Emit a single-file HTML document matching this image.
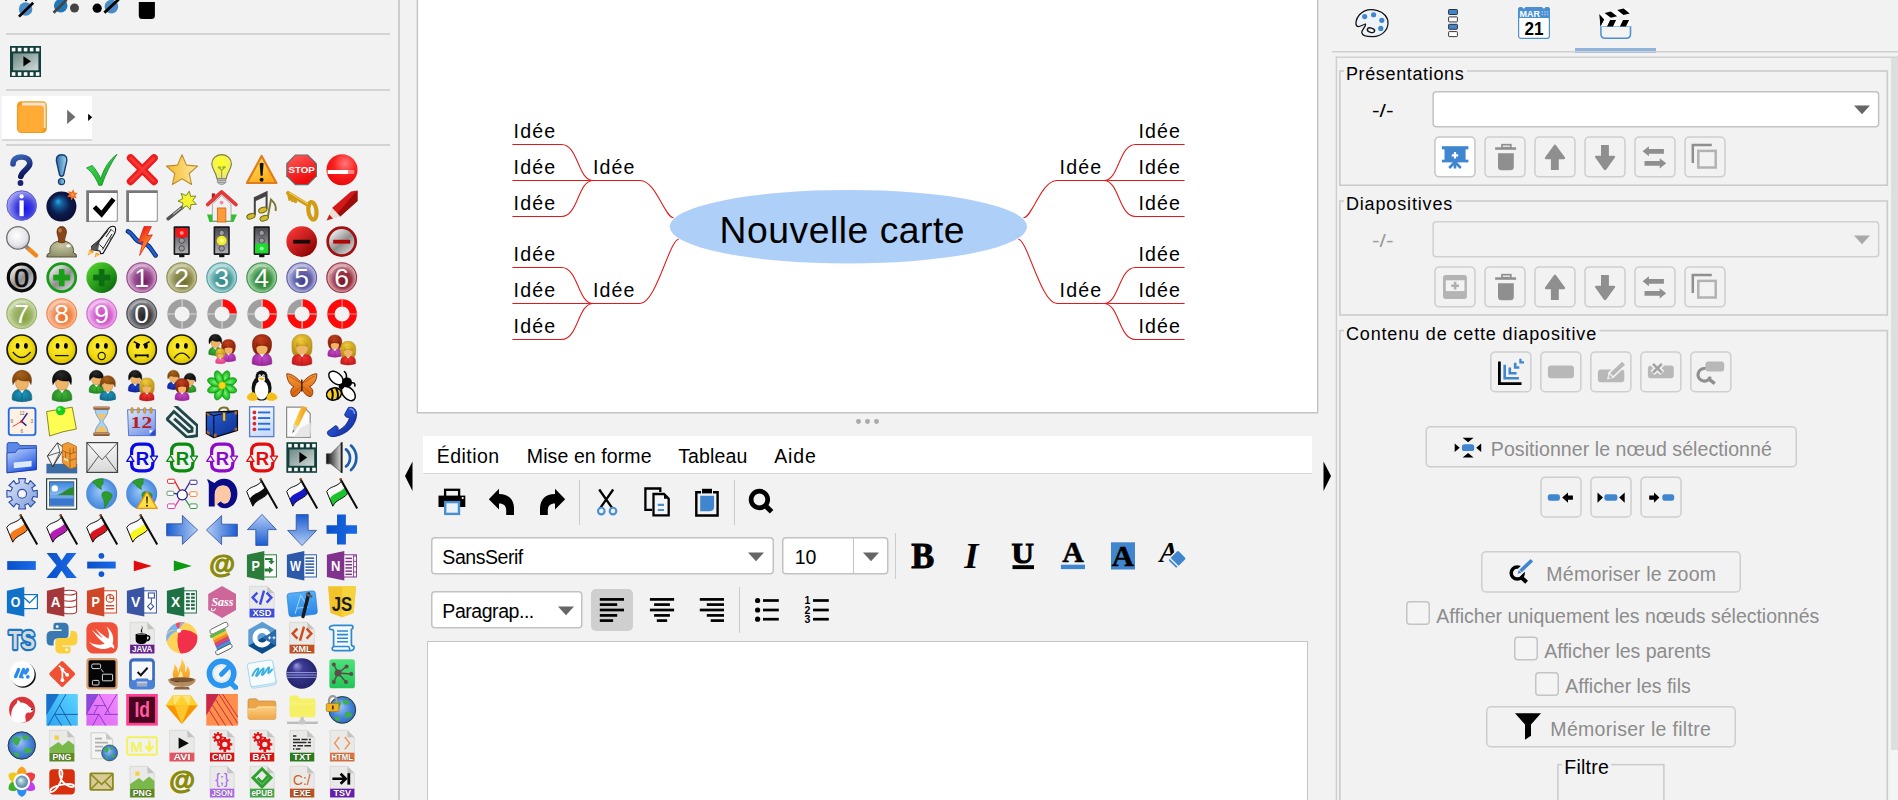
<!DOCTYPE html>
<html lang="fr"><head><meta charset="utf-8"><title>Freeplane</title><style>
html,body{margin:0;padding:0;background:#f2f2f2;overflow:hidden}
#app{position:relative;width:1898px;height:800px;overflow:hidden;background:#f2f2f2;font-family:"Liberation Sans",sans-serif}
#app div,#app span,#app svg{position:absolute}
#left{left:0;top:0;width:398px;height:800px}
.t{white-space:nowrap}
</style></head><body><div id="app">
<div id="left">
<svg class="i" style="left:0px;top:0px" width="200" height="24" viewBox="0 0 200 24"><circle cx="25.6" cy="9" r="6.8" fill="#4a8cc8"/><path d="M19 16.6 L33.2 2.8" stroke="#000" stroke-width="2.7"/><circle cx="26" cy="0" r="1.2" fill="#000"/><circle cx="60.7" cy="5.7" r="6.8" fill="#1f78b8"/><path d="M53.6 12.8 L66.6 -0.2" stroke="#444" stroke-width="2.8"/><circle cx="74.5" cy="8" r="4.5" fill="#444"/><circle cx="97.2" cy="8.2" r="4.6" fill="#000"/><circle cx="111.4" cy="6.6" r="6.8" fill="#4a8cc8"/><path d="M104.4 12.6 L118.6 -0.6" stroke="#000" stroke-width="2.8"/><path d="M138.8 1.9 H154.9 V15.5 Q154.9 19 151.4 19 H142.3 Q138.8 19 138.8 15.5 Z" fill="#000"/></svg>
<div class="ab" style="left:6px;top:33px;width:384px;height:2px;background:#d4d4d4"></div>
<div class="ab" style="left:6px;top:89px;width:384px;height:2px;background:#d4d4d4"></div>
<div class="ab" style="left:6px;top:144px;width:384px;height:2px;background:#d4d4d4"></div>
<svg class="i" style="left:10px;top:46px" width="32" height="32" viewBox="0 0 32 32"><defs><linearGradient id="fg" x1="0" y1="0" x2="1" y2="1"><stop offset="0" stop-color="#6f8884"/><stop offset="1" stop-color="#d0dad8"/></linearGradient></defs><rect x="0" y="0" width="31" height="31" fill="#123f3b"/><rect x="1.8" y="1.8" width="3.6" height="3.6" fill="#fff"/><rect x="1.8" y="26.2" width="3.6" height="3.6" fill="#fff"/><rect x="7.8" y="1.8" width="3.6" height="3.6" fill="#fff"/><rect x="7.8" y="26.2" width="3.6" height="3.6" fill="#fff"/><rect x="13.8" y="1.8" width="3.6" height="3.6" fill="#fff"/><rect x="13.8" y="26.2" width="3.6" height="3.6" fill="#fff"/><rect x="19.8" y="1.8" width="3.6" height="3.6" fill="#fff"/><rect x="19.8" y="26.2" width="3.6" height="3.6" fill="#fff"/><rect x="25.8" y="1.8" width="3.6" height="3.6" fill="#fff"/><rect x="25.8" y="26.2" width="3.6" height="3.6" fill="#fff"/><rect x="3.1" y="7.4" width="25.3" height="16.9" fill="url(#fg)"/><path d="M13.4 10.2 V20.5 L21 15.35 Z" fill="#000"/></svg>
<div class="ab" style="left:2px;top:96px;width:90px;height:43px;background:#fff;border-bottom:2px solid #d9d9d9"></div>
<svg class="i" style="left:15px;top:99px" width="36" height="36" viewBox="0 0 36 36"><rect x="1.9" y="2.2" width="30" height="31.8" rx="4.5" fill="#f29c1f"/><path d="M7 3.6 H28 Q30.6 3.6 30.6 6.5 V29 H28.6 V7.5 H7 Z" fill="#efe2cf"/><rect x="3.2" y="6.6" width="25" height="26.4" rx="2.5" fill="#ffab35"/></svg>
<svg class="i" style="left:64px;top:106px" width="32" height="20" viewBox="0 0 32 20"><path d="M3.1 3.7 V18.1 L11.5 10.9 Z" fill="#6e6e6e"/><path d="M24.1 7.8 V14.9 L28.2 11.35 Z" fill="#000"/></svg>
<svg class="i" style="left:0;top:0" width="398" height="800" viewBox="0 0 398 800"><defs><linearGradient id="gq" x1="0" y1="0" x2="0.3" y2="1"><stop offset="0" stop-color="#3a64b8"/><stop offset="1" stop-color="#10185e"/></linearGradient><linearGradient id="ge" x1="0" y1="0" x2="1" y2="0"><stop offset="0" stop-color="#2a6aa8"/><stop offset="1" stop-color="#a6d8f2"/></linearGradient><linearGradient id="gk" x1="0" y1="0" x2="1" y2="1"><stop offset="0" stop-color="#4be058"/><stop offset="1" stop-color="#12a024"/></linearGradient><linearGradient id="gs" x1="0" y1="0" x2="1" y2="0"><stop offset="0" stop-color="#f6b82a"/><stop offset="1" stop-color="#ffe9a0"/></linearGradient><radialGradient id="gb" cx="0.5" cy="0.35" r="0.6"><stop offset="0" stop-color="#ffff20"/><stop offset="0.7" stop-color="#f4f25a"/><stop offset="1" stop-color="#e6e690"/></radialGradient><linearGradient id="gw" x1="0" y1="0" x2="0.6" y2="1"><stop offset="0" stop-color="#fff060"/><stop offset="1" stop-color="#ffa818"/></linearGradient><linearGradient id="gst" x1="0" y1="0" x2="0.4" y2="1"><stop offset="0" stop-color="#ff5a5a"/><stop offset="1" stop-color="#ee0a0a"/></linearGradient><radialGradient id="gn" cx="0.6" cy="0.3" r="0.75"><stop offset="0" stop-color="#ff7a7a"/><stop offset="0.5" stop-color="#fa2020"/><stop offset="1" stop-color="#e60808"/></radialGradient><radialGradient id="gi" cx="0.6" cy="0.6" r="0.62"><stop offset="0" stop-color="#1414e8"/><stop offset="0.45" stop-color="#3c3ce0"/><stop offset="1" stop-color="#aaaaf2"/></radialGradient><radialGradient id="gbo" cx="0.5" cy="0.5" r="0.55" fx="0.38" fy="0.32"><stop offset="0" stop-color="#20b0e0"/><stop offset="0.25" stop-color="#145a98"/><stop offset="0.6" stop-color="#0c1c4c"/><stop offset="1" stop-color="#0a0a30"/></radialGradient><radialGradient id="gmg" cx="0.45" cy="0.4" r="0.6"><stop offset="0" stop-color="#ffffff"/><stop offset="0.7" stop-color="#e6e6ea"/><stop offset="1" stop-color="#c4c4cc"/></radialGradient><radialGradient id="gsp" cx="0.5" cy="0.3" r="0.7"><stop offset="0" stop-color="#c4c4a0"/><stop offset="1" stop-color="#8e8e6a"/></radialGradient><linearGradient id="glt" x1="0.3" y1="0" x2="0.7" y2="1"><stop offset="0" stop-color="#f01818"/><stop offset="1" stop-color="#ffc428"/></linearGradient><linearGradient id="gtlr" x1="0" y1="0" x2="0" y2="1"><stop offset="0" stop-color="#4a4a52"/><stop offset="1" stop-color="#b0b0b4"/></linearGradient><linearGradient id="gtly" x1="0" y1="0" x2="0" y2="1"><stop offset="0" stop-color="#4a4a52"/><stop offset="1" stop-color="#b0b0b4"/></linearGradient><linearGradient id="gtlg" x1="0" y1="0" x2="0" y2="1"><stop offset="0" stop-color="#4a4a52"/><stop offset="1" stop-color="#b0b0b4"/></linearGradient><linearGradient id="gmr" x1="0.15" y1="0.1" x2="0.85" y2="0.9"><stop offset="0" stop-color="#f83434"/><stop offset="1" stop-color="#8c0404"/></linearGradient><linearGradient id="gsv" x1="0" y1="0" x2="1" y2="1"><stop offset="0" stop-color="#8c8c8c"/><stop offset="1" stop-color="#f2f2f2"/></linearGradient><linearGradient id="gsv2" x1="0.15" y1="0.1" x2="0.85" y2="0.9"><stop offset="0" stop-color="#f4f4f4"/><stop offset="0.55" stop-color="#8e8e8e"/><stop offset="1" stop-color="#d6d6d6"/></linearGradient><linearGradient id="gpg" x1="0.15" y1="0.1" x2="0.85" y2="0.9"><stop offset="0" stop-color="#4cd02a"/><stop offset="1" stop-color="#0c6c0e"/></linearGradient><radialGradient id="gb_1" cx="0.5" cy="0.5" r="0.56" fx="0.6" fy="0.66"><stop offset="0" stop-color="#6c1e62"/><stop offset="0.5" stop-color="#9a4a8e"/><stop offset="0.85" stop-color="#d2a8cc"/><stop offset="1" stop-color="#9a4a8e"/></radialGradient><radialGradient id="gb_2" cx="0.5" cy="0.5" r="0.56" fx="0.6" fy="0.66"><stop offset="0" stop-color="#6e6e30"/><stop offset="0.5" stop-color="#8e8e50"/><stop offset="0.85" stop-color="#c8c6a0"/><stop offset="1" stop-color="#8e8e50"/></radialGradient><radialGradient id="gb_3" cx="0.5" cy="0.5" r="0.56" fx="0.6" fy="0.66"><stop offset="0" stop-color="#2e8484"/><stop offset="0.5" stop-color="#52a0a0"/><stop offset="0.85" stop-color="#b4dcdc"/><stop offset="1" stop-color="#52a0a0"/></radialGradient><radialGradient id="gb_4" cx="0.5" cy="0.5" r="0.56" fx="0.6" fy="0.66"><stop offset="0" stop-color="#1e7626"/><stop offset="0.5" stop-color="#42964a"/><stop offset="0.85" stop-color="#a6d4aa"/><stop offset="1" stop-color="#42964a"/></radialGradient><radialGradient id="gb_5" cx="0.5" cy="0.5" r="0.56" fx="0.6" fy="0.66"><stop offset="0" stop-color="#3c3c8e"/><stop offset="0.5" stop-color="#6464ac"/><stop offset="0.85" stop-color="#b8b8e0"/><stop offset="1" stop-color="#6464ac"/></radialGradient><radialGradient id="gb_6" cx="0.5" cy="0.5" r="0.56" fx="0.6" fy="0.66"><stop offset="0" stop-color="#741422"/><stop offset="0.5" stop-color="#9c3646"/><stop offset="0.85" stop-color="#d8a8ae"/><stop offset="1" stop-color="#9c3646"/></radialGradient><radialGradient id="gb_7" cx="0.5" cy="0.5" r="0.56" fx="0.6" fy="0.66"><stop offset="0" stop-color="#86a040"/><stop offset="0.5" stop-color="#9cb464"/><stop offset="0.85" stop-color="#ccd8ae"/><stop offset="1" stop-color="#9cb464"/></radialGradient><radialGradient id="gb_8" cx="0.5" cy="0.5" r="0.56" fx="0.6" fy="0.66"><stop offset="0" stop-color="#ec6c28"/><stop offset="0.5" stop-color="#f28a50"/><stop offset="0.85" stop-color="#f8c0a0"/><stop offset="1" stop-color="#f28a50"/></radialGradient><radialGradient id="gb_9" cx="0.5" cy="0.5" r="0.56" fx="0.6" fy="0.66"><stop offset="0" stop-color="#c444c0"/><stop offset="0.5" stop-color="#d668d2"/><stop offset="0.85" stop-color="#eeb4ec"/><stop offset="1" stop-color="#d668d2"/></radialGradient><radialGradient id="gb_0" cx="0.5" cy="0.5" r="0.56" fx="0.6" fy="0.66"><stop offset="0" stop-color="#1c1c1e"/><stop offset="0.5" stop-color="#4a4a4e"/><stop offset="0.85" stop-color="#9c9ca0"/><stop offset="1" stop-color="#4a4a4e"/></radialGradient><radialGradient id="gsm" cx="0.5" cy="0.5" r="0.6" fx="0.4" fy="0.3"><stop offset="0" stop-color="#fff040"/><stop offset="0.6" stop-color="#f2dc10"/><stop offset="1" stop-color="#cdb400"/></radialGradient><radialGradient id="ph1" cx="0.5" cy="0.4" r="0.7" fx="0.4" fy="0.25"><stop offset="0" stop-color="#2a2a2a"/><stop offset="1" stop-color="#000"/></radialGradient><radialGradient id="ps1" cx="0.5" cy="0.5" r="0.75" fx="0.5" fy="0.3"><stop offset="0" stop-color="#44b83a"/><stop offset="1" stop-color="#1c7a1c"/></radialGradient><radialGradient id="ph2" cx="0.5" cy="0.4" r="0.7" fx="0.4" fy="0.25"><stop offset="0" stop-color="#c4401c"/><stop offset="1" stop-color="#7e1c08"/></radialGradient><radialGradient id="ps2" cx="0.5" cy="0.5" r="0.75" fx="0.5" fy="0.3"><stop offset="0" stop-color="#cc4ccc"/><stop offset="1" stop-color="#8a1c8a"/></radialGradient><radialGradient id="ph3" cx="0.5" cy="0.4" r="0.7" fx="0.4" fy="0.25"><stop offset="0" stop-color="#f4cc3c"/><stop offset="1" stop-color="#b08a14"/></radialGradient><radialGradient id="ps3" cx="0.5" cy="0.5" r="0.75" fx="0.5" fy="0.3"><stop offset="0" stop-color="#ff6aa8"/><stop offset="1" stop-color="#d0387a"/></radialGradient><radialGradient id="ph4" cx="0.5" cy="0.4" r="0.7" fx="0.4" fy="0.25"><stop offset="0" stop-color="#c4401c"/><stop offset="1" stop-color="#7e1c08"/></radialGradient><radialGradient id="ps4" cx="0.5" cy="0.5" r="0.75" fx="0.5" fy="0.3"><stop offset="0" stop-color="#cc4ccc"/><stop offset="1" stop-color="#8a1c8a"/></radialGradient><radialGradient id="ph5" cx="0.5" cy="0.4" r="0.7" fx="0.4" fy="0.25"><stop offset="0" stop-color="#f4cc3c"/><stop offset="1" stop-color="#b08a14"/></radialGradient><radialGradient id="ps5" cx="0.5" cy="0.5" r="0.75" fx="0.5" fy="0.3"><stop offset="0" stop-color="#f83838"/><stop offset="1" stop-color="#b01010"/></radialGradient><radialGradient id="ph6" cx="0.5" cy="0.4" r="0.7" fx="0.4" fy="0.25"><stop offset="0" stop-color="#c4401c"/><stop offset="1" stop-color="#7e1c08"/></radialGradient><radialGradient id="ps6" cx="0.5" cy="0.5" r="0.75" fx="0.5" fy="0.3"><stop offset="0" stop-color="#cc4ccc"/><stop offset="1" stop-color="#8a1c8a"/></radialGradient><radialGradient id="ph7" cx="0.5" cy="0.4" r="0.7" fx="0.4" fy="0.25"><stop offset="0" stop-color="#f4cc3c"/><stop offset="1" stop-color="#b08a14"/></radialGradient><radialGradient id="ps7" cx="0.5" cy="0.5" r="0.75" fx="0.5" fy="0.3"><stop offset="0" stop-color="#f83838"/><stop offset="1" stop-color="#b01010"/></radialGradient><radialGradient id="ph8" cx="0.5" cy="0.4" r="0.7" fx="0.4" fy="0.25"><stop offset="0" stop-color="#a8621c"/><stop offset="1" stop-color="#6e3a08"/></radialGradient><radialGradient id="ps8" cx="0.5" cy="0.5" r="0.75" fx="0.5" fy="0.3"><stop offset="0" stop-color="#1e9ac0"/><stop offset="1" stop-color="#0c5e7c"/></radialGradient><radialGradient id="ph9" cx="0.5" cy="0.4" r="0.7" fx="0.4" fy="0.25"><stop offset="0" stop-color="#2a2a2a"/><stop offset="1" stop-color="#000"/></radialGradient><radialGradient id="ps9" cx="0.5" cy="0.5" r="0.75" fx="0.5" fy="0.3"><stop offset="0" stop-color="#44b83a"/><stop offset="1" stop-color="#1c7a1c"/></radialGradient><radialGradient id="ph10" cx="0.5" cy="0.4" r="0.7" fx="0.4" fy="0.25"><stop offset="0" stop-color="#2a2a2a"/><stop offset="1" stop-color="#000"/></radialGradient><radialGradient id="ps10" cx="0.5" cy="0.5" r="0.75" fx="0.5" fy="0.3"><stop offset="0" stop-color="#44b83a"/><stop offset="1" stop-color="#1c7a1c"/></radialGradient><radialGradient id="ph11" cx="0.5" cy="0.4" r="0.7" fx="0.4" fy="0.25"><stop offset="0" stop-color="#a8621c"/><stop offset="1" stop-color="#6e3a08"/></radialGradient><radialGradient id="ps11" cx="0.5" cy="0.5" r="0.75" fx="0.5" fy="0.3"><stop offset="0" stop-color="#1e9ac0"/><stop offset="1" stop-color="#0c5e7c"/></radialGradient><radialGradient id="ph12" cx="0.5" cy="0.4" r="0.7" fx="0.4" fy="0.25"><stop offset="0" stop-color="#2a2a2a"/><stop offset="1" stop-color="#000"/></radialGradient><radialGradient id="ps12" cx="0.5" cy="0.5" r="0.75" fx="0.5" fy="0.3"><stop offset="0" stop-color="#1c44d8"/><stop offset="1" stop-color="#0c1c8a"/></radialGradient><radialGradient id="ph13" cx="0.5" cy="0.4" r="0.7" fx="0.4" fy="0.25"><stop offset="0" stop-color="#f4cc3c"/><stop offset="1" stop-color="#b08a14"/></radialGradient><radialGradient id="ps13" cx="0.5" cy="0.5" r="0.75" fx="0.5" fy="0.3"><stop offset="0" stop-color="#f83838"/><stop offset="1" stop-color="#b01010"/></radialGradient><radialGradient id="ph14" cx="0.5" cy="0.4" r="0.7" fx="0.4" fy="0.25"><stop offset="0" stop-color="#a8621c"/><stop offset="1" stop-color="#6e3a08"/></radialGradient><radialGradient id="ps14" cx="0.5" cy="0.5" r="0.75" fx="0.5" fy="0.3"><stop offset="0" stop-color="#1c44d8"/><stop offset="1" stop-color="#0c1c8a"/></radialGradient><radialGradient id="ph15" cx="0.5" cy="0.4" r="0.7" fx="0.4" fy="0.25"><stop offset="0" stop-color="#2a2a2a"/><stop offset="1" stop-color="#000"/></radialGradient><radialGradient id="ps15" cx="0.5" cy="0.5" r="0.75" fx="0.5" fy="0.3"><stop offset="0" stop-color="#44b83a"/><stop offset="1" stop-color="#1c7a1c"/></radialGradient><radialGradient id="ph16" cx="0.5" cy="0.4" r="0.7" fx="0.4" fy="0.25"><stop offset="0" stop-color="#c4401c"/><stop offset="1" stop-color="#7e1c08"/></radialGradient><radialGradient id="ps16" cx="0.5" cy="0.5" r="0.75" fx="0.5" fy="0.3"><stop offset="0" stop-color="#cc4ccc"/><stop offset="1" stop-color="#8a1c8a"/></radialGradient><radialGradient id="gfl" cx="0.5" cy="0.5" r="0.6"><stop offset="0" stop-color="#7af07a"/><stop offset="0.6" stop-color="#28c828"/><stop offset="1" stop-color="#0c9a0c"/></radialGradient><linearGradient id="gbf" x1="0" y1="0" x2="0" y2="1"><stop offset="0" stop-color="#f89a38"/><stop offset="1" stop-color="#d8600c"/></linearGradient><linearGradient id="gcal" x1="0" y1="0" x2="0.6" y2="1"><stop offset="0" stop-color="#dfe8fc"/><stop offset="1" stop-color="#7a9ae8"/></linearGradient><linearGradient id="gbc" x1="0" y1="0" x2="1" y2="1"><stop offset="0" stop-color="#2a62d8"/><stop offset="1" stop-color="#0c2c8c"/></linearGradient><linearGradient id="gls" x1="0" y1="0" x2="0.5" y2="1"><stop offset="0" stop-color="#ffffff"/><stop offset="1" stop-color="#c8dcfa"/></linearGradient><linearGradient id="gpn" x1="0" y1="0" x2="1" y2="0"><stop offset="0" stop-color="#ffd24a"/><stop offset="1" stop-color="#f09a18"/></linearGradient><linearGradient id="gph" x1="0" y1="0" x2="1" y2="1"><stop offset="0" stop-color="#3a6cf0"/><stop offset="1" stop-color="#0a2494"/></linearGradient><linearGradient id="gfo" x1="0.1" y1="0" x2="0.7" y2="1"><stop offset="0" stop-color="#bcd6fc"/><stop offset="1" stop-color="#1c4ee0"/></linearGradient><linearGradient id="gml" x1="0" y1="0" x2="0" y2="1"><stop offset="0" stop-color="#f8f8f8"/><stop offset="1" stop-color="#d8d8d8"/></linearGradient><linearGradient id="fg2" x1="0" y1="0" x2="1" y2="1"><stop offset="0" stop-color="#6f8884"/><stop offset="1" stop-color="#d0dad8"/></linearGradient><linearGradient id="gau" x1="0" y1="0" x2="1" y2="0"><stop offset="0" stop-color="#0a0a0a"/><stop offset="1" stop-color="#e8e8e8"/></linearGradient><linearGradient id="ggr" x1="0" y1="0" x2="1" y2="1"><stop offset="0" stop-color="#dfe8f8"/><stop offset="1" stop-color="#7a9ad8"/></linearGradient><linearGradient id="gim" x1="0" y1="0" x2="0" y2="1"><stop offset="0" stop-color="#3c86e0"/><stop offset="1" stop-color="#c4e2fa"/></linearGradient><radialGradient id="ggl" cx="0.5" cy="0.5" r="0.6" fx="0.45" fy="0.4"><stop offset="0" stop-color="#9cc8f8"/><stop offset="0.6" stop-color="#5a9ae6"/><stop offset="1" stop-color="#3c7cd0"/></radialGradient><linearGradient id="garr" x1="0" y1="0" x2="1" y2="0"><stop offset="0" stop-color="#1a5cd2"/><stop offset="1" stop-color="#b4cef4"/></linearGradient><linearGradient id="garl" x1="0" y1="0" x2="1" y2="0"><stop offset="0" stop-color="#1a5cd2"/><stop offset="1" stop-color="#b4cef4"/></linearGradient><linearGradient id="garu" x1="0" y1="0" x2="1" y2="0"><stop offset="0" stop-color="#1a5cd2"/><stop offset="1" stop-color="#b4cef4"/></linearGradient><linearGradient id="gard" x1="0" y1="0" x2="1" y2="0"><stop offset="0" stop-color="#1a5cd2"/><stop offset="1" stop-color="#b4cef4"/></linearGradient><linearGradient id="gpb" x1="0" y1="0" x2="1" y2="0"><stop offset="0" stop-color="#0a50c8"/><stop offset="1" stop-color="#1a6ae8"/></linearGradient><linearGradient id="gxc" x1="0" y1="0" x2="0" y2="1"><stop offset="0" stop-color="#54b0f8"/><stop offset="1" stop-color="#2a86e6"/></linearGradient><linearGradient id="gfi" x1="0" y1="0" x2="0" y2="1"><stop offset="0" stop-color="#ffd45a"/><stop offset="1" stop-color="#f49a1c"/></linearGradient><radialGradient id="gec" cx="0.5" cy="0.5" r="0.6" fx="0.32" fy="0.22"><stop offset="0" stop-color="#9c9ce0"/><stop offset="0.3" stop-color="#3c3c94"/><stop offset="1" stop-color="#1c1c62"/></radialGradient><linearGradient id="gnw" x1="0" y1="0" x2="0" y2="1"><stop offset="0" stop-color="#4ce27a"/><stop offset="1" stop-color="#22c458"/></linearGradient><linearGradient id="gad" x1="0" y1="1" x2="1" y2="0"><stop offset="0" stop-color="#2aa4f2"/><stop offset="1" stop-color="#5cd4ff"/></linearGradient><linearGradient id="gap" x1="0" y1="1" x2="1" y2="0"><stop offset="0" stop-color="#d864f2"/><stop offset="1" stop-color="#f48cff"/></linearGradient><linearGradient id="gfy" x1="0" y1="0" x2="0" y2="1"><stop offset="0" stop-color="#fcd083"/><stop offset="1" stop-color="#f0a848"/></linearGradient><radialGradient id="ggl2" cx="0.5" cy="0.5" r="0.6" fx="0.4" fy="0.35"><stop offset="0" stop-color="#a8c8f4"/><stop offset="0.55" stop-color="#4a86dc"/><stop offset="1" stop-color="#2c5cb8"/></radialGradient><radialGradient id="gpc" cx="0.5" cy="0.5" r="0.55" fx="0.4" fy="0.35"><stop offset="0" stop-color="#e8f4f8"/><stop offset="0.5" stop-color="#8ab4c8"/><stop offset="1" stop-color="#4a7a9a"/></radialGradient></defs><g transform="translate(6,154)"><path d="M7 10 C7 5.4 10.5 3 15.5 3 C20.8 3 23.8 5.8 23.8 9.6 C23.8 14.5 16.5 16.2 14.8 22.4" fill="none" stroke="url(#gq)" stroke-width="5.6" stroke-linecap="round"/><circle cx="14.5" cy="29" r="2.9" fill="#1a2470"/></g><g transform="translate(46,154)"><path d="M15.6 0.8 C20 0.8 21.2 3.6 20.8 7 L17.6 21 Q15.6 23.6 13.6 21 L10.4 7 C10 3.6 11.2 0.8 15.6 0.8 Z" fill="url(#ge)" stroke="#143c6c" stroke-width="1.4"/><circle cx="15.5" cy="27.6" r="3.1" fill="url(#ge)" stroke="#143c6c" stroke-width="1.2"/></g><g transform="translate(86,154)"><path d="M0.6 14 L6.2 11.4 C9.5 15 12.6 20 14.8 24.6 C18 14 24 5 31 0.4 C25 9 19.5 20 15.8 31.3 L12.8 31.3 C10 24 5.5 17.5 0.6 14 Z" fill="url(#gk)" stroke="#0c8c1e" stroke-width="0.8"/></g><g transform="translate(126,154)"><path d="M4.6 4 L28 27.4 M28 4 L4.6 27.4" stroke="#ee1c1c" stroke-width="7.6" stroke-linecap="round"/><path d="M5 4.4 L27.6 27 M27.6 4.4 L5 27" stroke="#ff4848" stroke-width="3" stroke-linecap="round" opacity="0.6"/></g><g transform="translate(166,154)"><polygon points="16.0,0.8 20.5,11.1 31.6,12.1 23.2,19.5 25.6,30.5 16.0,24.8 6.4,30.5 8.8,19.5 0.4,12.1 11.5,11.1" fill="url(#gs)" stroke="#b98d2c" stroke-width="1.1" stroke-linejoin="round"/></g><g transform="translate(206,154)"><path d="M15.6 0.6 C21.5 0.6 25.4 4.8 25.4 10 C25.4 15 20.8 18.5 20.2 24.6 H11 C10.4 18.5 5.8 15 5.8 10 C5.8 4.8 9.7 0.6 15.6 0.6 Z" fill="url(#gb)" stroke="#7d7d30" stroke-width="1.1"/><path d="M13.5 14 L15.6 16.5 L17.8 14 M15.6 16.5 V24" stroke="#a8a83a" stroke-width="1.3" fill="none"/><ellipse cx="13.4" cy="13.4" rx="1.8" ry="1.2" fill="#9ab83a"/><ellipse cx="18" cy="13.2" rx="1.8" ry="1.2" fill="#9ab83a"/><path d="M11.4 24.8 H19.8 V28.5 Q15.6 32.6 11.4 28.5 Z" fill="#c8c8c8" stroke="#888" stroke-width="0.8"/><path d="M11.6 26.6 H19.6 M12 28.6 H19.2" stroke="#888" stroke-width="0.8"/></g><g transform="translate(246,154)"><path d="M15.6 2 L30.4 29 H0.9 Z" fill="url(#gw)" stroke="#e27b1b" stroke-width="2.2" stroke-linejoin="round"/><path d="M13.6 9.4 Q15.6 8 17.6 9.4 L16.6 21.8 H14.6 Z" fill="#111"/><circle cx="15.6" cy="25.8" r="2" fill="#111"/></g><g transform="translate(286,154)"><polygon points="31.0,22.2 22.0,31.2 9.2,31.2 0.2,22.2 0.2,9.4 9.2,0.4 22.0,0.4 31.0,9.4" fill="#6a6a6a"/><polygon points="29.8,21.7 21.5,30.0 9.7,30.0 1.4,21.7 1.4,9.9 9.7,1.6 21.5,1.6 29.8,9.9" fill="url(#gst)"/><text x="2.6" y="19.2" font-family="Liberation Sans, sans-serif" font-weight="bold" font-size="9.6" fill="#fff" textLength="26.2" lengthAdjust="spacingAndGlyphs">STOP</text></g><g transform="translate(326,154)"><circle cx="16" cy="15.8" r="15.5" fill="url(#gn)"/><rect x="1.6" y="16" width="20.6" height="4" fill="#fff"/><rect x="22.2" y="16" width="6" height="4" fill="#ffd0d0" opacity="0.55"/></g><g transform="translate(6,190)"><circle cx="15.7" cy="15.6" r="14.8" fill="url(#gi)" stroke="#5c5ccc" stroke-width="1"/><circle cx="15.6" cy="6.4" r="2.1" fill="#fff"/><rect x="13.5" y="10.4" width="4.2" height="15.8" fill="#fff"/></g><g transform="translate(46,190)"><circle cx="15.4" cy="16.6" r="15" fill="url(#gbo)"/><polygon points="27.4,-0.7 28.3,2.5 31.7,2.9 29.4,5.3 30.7,8.4 27.4,7.6 25.4,10.3 24.5,7.1 21.1,6.7 23.4,4.3 22.1,1.2 25.4,2.0" fill="#f06a28"/><circle cx="26.6" cy="4.6" r="1.6" fill="#ff9a3a"/></g><g transform="translate(86,190)"><rect x="0.2" y="0.2" width="31.6" height="31.6" fill="#fff"/><path d="M0.2 32 V0.2 H31.8 V3 H3 V32 Z" fill="#777"/><path d="M31.3 3 V31.3 H3" fill="none" stroke="#8a8a8a" stroke-width="1"/><path d="M8.4 16.8 L15.6 24.2 L27.6 9" fill="none" stroke="#000" stroke-width="4.8"/></g><g transform="translate(126,190)"><rect x="0.2" y="0.2" width="31.6" height="31.6" fill="#fff"/><path d="M0.2 32 V0.2 H31.8 V3 H3 V32 Z" fill="#777"/><path d="M31.3 3 V31.3 H3" fill="none" stroke="#8a8a8a" stroke-width="1"/></g><g transform="translate(166,190)"><path d="M16.6 17.2 L2 28.8" stroke="#555" stroke-width="3.4" stroke-linecap="round"/><path d="M15 18 L7 24.4" stroke="#bbb" stroke-width="1.1"/><polygon points="23.3,1.1 24.6,6.4 30.0,6.0 26.8,10.3 30.4,14.3 25.0,14.5 24.2,19.8 20.7,15.7 16.0,18.4 17.0,13.1 12.0,11.1 16.8,8.6 15.2,3.4 20.2,5.6" fill="#f4f430" stroke="#7a8a2a" stroke-width="1"/></g><g transform="translate(206,190)"><path d="M1 24.5 H31 L27.5 32 H3.5 Z" fill="#2fc02f"/><rect x="5.8" y="3.4" width="3.4" height="7" fill="#a82020"/><path d="M6.4 14 L15.6 5.5 L25 14 V31 H6.4 Z" fill="#eef0f2" stroke="#9a9a9a" stroke-width="0.8"/><path d="M1.6 14.6 L15.6 1.8 L30 14.6" fill="none" stroke="#e23a3a" stroke-width="3.6" stroke-linejoin="round" stroke-linecap="round"/><circle cx="15.6" cy="12.6" r="1.9" fill="#f08a9a"/><rect x="11.4" y="18" width="8.4" height="14" fill="#ff9a3a" stroke="#d06a18" stroke-width="0.9"/></g><g transform="translate(246,190)"><path d="M8.8 25 V8 L20.6 2.4 V19" fill="none" stroke="#444" stroke-width="2"/><path d="M8.8 8 L20.6 2.4 V6 L8.8 11.6 Z" fill="#444"/><path d="M21.8 27 L25 9.6 C27 12 31 14 29.6 21" fill="none" stroke="#7a7430" stroke-width="1.9"/><ellipse cx="5" cy="26.2" rx="4.3" ry="2.6" transform="rotate(-20 5 26.2)" fill="#d4bc24" stroke="#6a6420" stroke-width="1"/><ellipse cx="16.8" cy="20" rx="4.3" ry="2.6" transform="rotate(-20 16.8 20)" fill="#d4bc24" stroke="#6a6420" stroke-width="1"/><ellipse cx="18.2" cy="28.2" rx="4.3" ry="2.6" transform="rotate(-20 18.2 28.2)" fill="#d4bc24" stroke="#6a6420" stroke-width="1"/></g><g transform="translate(286,190)"><path d="M2 3 L23 15.6" stroke="#cf9c14" stroke-width="4" stroke-linecap="round"/><path d="M2.4 4 L4 10.6 M5.8 6 L6.8 12 M9.2 8.4 L9.8 13" stroke="#cf9c14" stroke-width="2.8"/><ellipse cx="26.4" cy="20.8" rx="4" ry="8.8" transform="rotate(-8 26.4 20.8)" fill="none" stroke="#cf9c14" stroke-width="4.2"/><path d="M3 2.6 L22 14" stroke="#f4d868" stroke-width="1"/></g><g transform="translate(326,190)"><path d="M31.5 0.6 V11 L14.2 26.4 L6 18 L25 1.6 Z" fill="#d41818"/><path d="M31.5 0.6 V11 L14.2 26.4 L11.5 23.6 L28 4 Z" fill="#9c0c0c"/><path d="M6 18 L14.2 26.4 L0.6 30.6 Z" fill="#eadfd6"/><path d="M3.4 24.4 L7 28.4 L0.6 30.6 Z" fill="#c81c1c"/></g><g transform="translate(6,226)"><path d="M20.4 20.8 L30 29.4" stroke="#f08a1c" stroke-width="4.4" stroke-linecap="round"/><path d="M19.4 19.8 L22.4 22.6" stroke="#8a8a8a" stroke-width="3.4"/><circle cx="12" cy="11.9" r="11.3" fill="url(#gmg)" stroke="#6e6e6e" stroke-width="1.3"/></g><g transform="translate(46,226)"><path d="M0.8 31 Q0.4 27.4 4 27 C3 20 7 15 15.6 15 C24 15 28.4 20 27.4 27 Q31 27.4 30.6 31 Z" fill="url(#gsp)" stroke="#55553a" stroke-width="1"/><path d="M12.4 16 C13.6 12 11 9.6 11 6 C11 2.6 13 0.6 15.6 0.6 C18.4 0.6 20.4 2.6 20.4 6 C20.4 9.6 17.8 12 19 16 Q15.6 17.6 12.4 16 Z" fill="#8a4618" stroke="#5a2a0c" stroke-width="0.8"/><ellipse cx="14" cy="4.4" rx="1.8" ry="2.2" fill="#b87a48"/><ellipse cx="22.4" cy="19.8" rx="2.4" ry="1.6" fill="#fff" opacity="0.9"/></g><g transform="translate(86,226)"><path d="M4 23 L1.6 29.6 L8 26 Z" fill="#ff8a1a"/><path d="M10 26.4 L8.4 31.4 L14 28.6 Z" fill="#ff8a1a"/><path d="M3.6 25 L2.4 28.4 L6 26.6 Z M10 28 L9.4 30.4 L12 29 Z" fill="#ffe040"/><path d="M28.8 0.8 C30.4 3 29.6 6 27.8 9 L17 27.4 L14.6 27.8 L14 25 L6 23.6 L5.6 20.4 L14 13.4 L22.6 2.4 C24.6 0.4 27 -0.2 28.8 0.8 Z" fill="#f4f4f6" stroke="#111" stroke-width="1.1" stroke-linejoin="round"/><path d="M14 13.4 L5.6 20.4 L6 23.6 L12 24.4 Z M27.8 9 L22 19 L24.4 12 Z" fill="#555"/><path d="M22 4.6 L10 19.6 M26 8 L16.4 23.6 M13.4 18.4 L17.4 22.4 M25 3.6 L20 11" stroke="#222" stroke-width="1" fill="none"/><path d="M24 3 L27.6 5.4" stroke="#555" stroke-width="1"/></g><g transform="translate(126,226)"><path d="M2 5.4 C8 8 8 15 15.6 16.6 C24 18 25 24 29.6 29.4" fill="none" stroke="#0c2a6c" stroke-width="4.6" stroke-linecap="round"/><path d="M2 5.4 C8 8 8 15 15.6 16.6 C24 18 25 24 29.6 29.4" fill="none" stroke="#1e62d8" stroke-width="2.6" stroke-linecap="round"/><path d="M18 0.6 H25.4 L21 9.6 L26.4 8.8 L13.6 29.4 L17 15.4 L12.4 16.4 Z" fill="url(#glt)" stroke="#e01010" stroke-width="0.7"/></g><g transform="translate(166,226)"><rect x="13.2" y="27" width="5.2" height="4.2" fill="#111"/><rect x="7.6" y="0.3" width="16.2" height="28.6" rx="1" fill="#1a1a1e"/><rect x="9.2" y="2" width="13" height="25.2" fill="url(#gtlr)"/><rect x="9.2" y="2" width="13" height="9.6" fill="#e81818" opacity="0.75"/><circle cx="15.7" cy="7" r="4.9" fill="#ff1010"/><circle cx="15.7" cy="7" r="2" fill="#ff9090"/><circle cx="15.7" cy="14.6" r="2.7" fill="#9a9aa0" stroke="#3a3a3e" stroke-width="0.8"/><circle cx="15.7" cy="22.4" r="2.7" fill="#9a9aa0" stroke="#3a3a3e" stroke-width="0.8"/></g><g transform="translate(206,226)"><rect x="13.2" y="27" width="5.2" height="4.2" fill="#111"/><rect x="7.6" y="0.3" width="16.2" height="28.6" rx="1" fill="#1a1a1e"/><rect x="9.2" y="2" width="13" height="25.2" fill="url(#gtly)"/><circle cx="15.7" cy="7" r="2.7" fill="#9a9aa0" stroke="#3a3a3e" stroke-width="0.8"/><circle cx="15.7" cy="14.6" r="4.9" fill="#f4f020"/><circle cx="15.7" cy="14.6" r="2" fill="#ffff9a"/><circle cx="15.7" cy="22.4" r="2.7" fill="#9a9aa0" stroke="#3a3a3e" stroke-width="0.8"/></g><g transform="translate(246,226)"><rect x="13.2" y="27" width="5.2" height="4.2" fill="#111"/><rect x="7.6" y="0.3" width="16.2" height="28.6" rx="1" fill="#1a1a1e"/><rect x="9.2" y="2" width="13" height="25.2" fill="url(#gtlg)"/><circle cx="15.7" cy="7" r="2.7" fill="#9a9aa0" stroke="#3a3a3e" stroke-width="0.8"/><circle cx="15.7" cy="14.6" r="2.7" fill="#9a9aa0" stroke="#3a3a3e" stroke-width="0.8"/><rect x="9.2" y="17.6" width="13" height="9.6" fill="#1ed82e"/><circle cx="15.7" cy="22.4" r="4.9" fill="#18e028"/><circle cx="15.7" cy="22.4" r="2" fill="#a0ffa8"/></g><g transform="translate(286,226)"><circle cx="15.7" cy="15.6" r="15.3" fill="url(#gmr)"/><rect x="7.2" y="13.8" width="17" height="3.8" fill="#1a0a0a"/></g><g transform="translate(326,226)"><circle cx="15.7" cy="15.6" r="14" fill="url(#gsv2)" stroke="#a01212" stroke-width="2.7"/><rect x="7.2" y="13.8" width="17" height="3.8" fill="#b00606"/></g><g transform="translate(6,262)"><circle cx="15.7" cy="15.4" r="13.4" fill="url(#gsv2)" stroke="#0a0a0a" stroke-width="3.2"/><text x="15.7" y="25" text-anchor="middle" font-family="Liberation Sans, sans-serif" font-size="26.5" fill="#0a0a0a" stroke="#0a0a0a" stroke-width="0.7">0</text></g><g transform="translate(46,262)"><circle cx="15.7" cy="15.6" r="14" fill="url(#gsv2)" stroke="#189a18" stroke-width="2.7"/><path d="M7.2 15.6 H24.2 M15.7 7 V24.2" stroke="#18a018" stroke-width="5.6"/></g><g transform="translate(86,262)"><circle cx="15.7" cy="15.6" r="15.3" fill="url(#gpg)"/><path d="M7.2 15.6 H24.2 M15.7 7 V24.2" stroke="#0b6e10" stroke-width="5.6"/></g><g transform="translate(126,262)"><circle cx="15.7" cy="15.6" r="14.9" fill="url(#gb_1)" stroke="#9a4a8e" stroke-width="1.1"/><path d="M5 11 A11.6 11.6 0 0 1 20 4.6" fill="none" stroke="#fff" stroke-width="1.6" stroke-linecap="round" opacity="0.35"/><text x="15.7" y="25" text-anchor="middle" font-family="Liberation Sans, sans-serif" font-size="26.5" fill="#fff">1</text></g><g transform="translate(166,262)"><circle cx="15.7" cy="15.6" r="14.9" fill="url(#gb_2)" stroke="#8e8e50" stroke-width="1.1"/><path d="M5 11 A11.6 11.6 0 0 1 20 4.6" fill="none" stroke="#fff" stroke-width="1.6" stroke-linecap="round" opacity="0.35"/><text x="15.7" y="25" text-anchor="middle" font-family="Liberation Sans, sans-serif" font-size="26.5" fill="#fff">2</text></g><g transform="translate(206,262)"><circle cx="15.7" cy="15.6" r="14.9" fill="url(#gb_3)" stroke="#52a0a0" stroke-width="1.1"/><path d="M5 11 A11.6 11.6 0 0 1 20 4.6" fill="none" stroke="#fff" stroke-width="1.6" stroke-linecap="round" opacity="0.35"/><text x="15.7" y="25" text-anchor="middle" font-family="Liberation Sans, sans-serif" font-size="26.5" fill="#fff">3</text></g><g transform="translate(246,262)"><circle cx="15.7" cy="15.6" r="14.9" fill="url(#gb_4)" stroke="#42964a" stroke-width="1.1"/><path d="M5 11 A11.6 11.6 0 0 1 20 4.6" fill="none" stroke="#fff" stroke-width="1.6" stroke-linecap="round" opacity="0.35"/><text x="15.7" y="25" text-anchor="middle" font-family="Liberation Sans, sans-serif" font-size="26.5" fill="#fff">4</text></g><g transform="translate(286,262)"><circle cx="15.7" cy="15.6" r="14.9" fill="url(#gb_5)" stroke="#6464ac" stroke-width="1.1"/><path d="M5 11 A11.6 11.6 0 0 1 20 4.6" fill="none" stroke="#fff" stroke-width="1.6" stroke-linecap="round" opacity="0.35"/><text x="15.7" y="25" text-anchor="middle" font-family="Liberation Sans, sans-serif" font-size="26.5" fill="#fff">5</text></g><g transform="translate(326,262)"><circle cx="15.7" cy="15.6" r="14.9" fill="url(#gb_6)" stroke="#9c3646" stroke-width="1.1"/><path d="M5 11 A11.6 11.6 0 0 1 20 4.6" fill="none" stroke="#fff" stroke-width="1.6" stroke-linecap="round" opacity="0.35"/><text x="15.7" y="25" text-anchor="middle" font-family="Liberation Sans, sans-serif" font-size="26.5" fill="#fff">6</text></g><g transform="translate(6,298)"><circle cx="15.7" cy="15.6" r="14.9" fill="url(#gb_7)" stroke="#9cb464" stroke-width="1.1"/><path d="M5 11 A11.6 11.6 0 0 1 20 4.6" fill="none" stroke="#fff" stroke-width="1.6" stroke-linecap="round" opacity="0.35"/><text x="15.7" y="25" text-anchor="middle" font-family="Liberation Sans, sans-serif" font-size="26.5" fill="#fff">7</text></g><g transform="translate(46,298)"><circle cx="15.7" cy="15.6" r="14.9" fill="url(#gb_8)" stroke="#f28a50" stroke-width="1.1"/><path d="M5 11 A11.6 11.6 0 0 1 20 4.6" fill="none" stroke="#fff" stroke-width="1.6" stroke-linecap="round" opacity="0.35"/><text x="15.7" y="25" text-anchor="middle" font-family="Liberation Sans, sans-serif" font-size="26.5" fill="#fff">8</text></g><g transform="translate(86,298)"><circle cx="15.7" cy="15.6" r="14.9" fill="url(#gb_9)" stroke="#d668d2" stroke-width="1.1"/><path d="M5 11 A11.6 11.6 0 0 1 20 4.6" fill="none" stroke="#fff" stroke-width="1.6" stroke-linecap="round" opacity="0.35"/><text x="15.7" y="25" text-anchor="middle" font-family="Liberation Sans, sans-serif" font-size="26.5" fill="#fff">9</text></g><g transform="translate(126,298)"><circle cx="15.7" cy="15.6" r="14.9" fill="url(#gb_0)" stroke="#4a4a4e" stroke-width="1.1"/><path d="M5 11 A11.6 11.6 0 0 1 20 4.6" fill="none" stroke="#fff" stroke-width="1.6" stroke-linecap="round" opacity="0.35"/><text x="15.7" y="25" text-anchor="middle" font-family="Liberation Sans, sans-serif" font-size="26.5" fill="#fff">0</text></g><g transform="translate(166,298)"><path d="M16.10 1.20 A14.8 14.8 0 0 1 30.90 16.00 L23.70 16.00 A7.6 7.6 0 0 0 16.10 8.40 Z" fill="#a0a0a0"/><path d="M30.90 16.00 A14.8 14.8 0 0 1 16.10 30.80 L16.10 23.60 A7.6 7.6 0 0 0 23.70 16.00 Z" fill="#a0a0a0"/><path d="M16.10 30.80 A14.8 14.8 0 0 1 1.30 16.00 L8.50 16.00 A7.6 7.6 0 0 0 16.10 23.60 Z" fill="#a0a0a0"/><path d="M1.30 16.00 A14.8 14.8 0 0 1 16.10 1.20 L16.10 8.40 A7.6 7.6 0 0 0 8.50 16.00 Z" fill="#a0a0a0"/><path d="M16.1 1.1999999999999993 V8.4 M16.1 23.6 V30.8 M1.3000000000000007 16 H8.500000000000002 M23.700000000000003 16 H30.900000000000002" stroke="#d8d8d8" stroke-width="1.1"/></g><g transform="translate(206,298)"><path d="M16.10 1.20 A14.8 14.8 0 0 1 30.90 16.00 L23.70 16.00 A7.6 7.6 0 0 0 16.10 8.40 Z" fill="#ff0a0a"/><path d="M30.90 16.00 A14.8 14.8 0 0 1 16.10 30.80 L16.10 23.60 A7.6 7.6 0 0 0 23.70 16.00 Z" fill="#a0a0a0"/><path d="M16.10 30.80 A14.8 14.8 0 0 1 1.30 16.00 L8.50 16.00 A7.6 7.6 0 0 0 16.10 23.60 Z" fill="#a0a0a0"/><path d="M1.30 16.00 A14.8 14.8 0 0 1 16.10 1.20 L16.10 8.40 A7.6 7.6 0 0 0 8.50 16.00 Z" fill="#a0a0a0"/><path d="M16.1 1.1999999999999993 V8.4 M16.1 23.6 V30.8 M1.3000000000000007 16 H8.500000000000002 M23.700000000000003 16 H30.900000000000002" stroke="#d8d8d8" stroke-width="1.1"/></g><g transform="translate(246,298)"><path d="M16.10 1.20 A14.8 14.8 0 0 1 30.90 16.00 L23.70 16.00 A7.6 7.6 0 0 0 16.10 8.40 Z" fill="#ff0a0a"/><path d="M30.90 16.00 A14.8 14.8 0 0 1 16.10 30.80 L16.10 23.60 A7.6 7.6 0 0 0 23.70 16.00 Z" fill="#ff0a0a"/><path d="M16.10 30.80 A14.8 14.8 0 0 1 1.30 16.00 L8.50 16.00 A7.6 7.6 0 0 0 16.10 23.60 Z" fill="#a0a0a0"/><path d="M1.30 16.00 A14.8 14.8 0 0 1 16.10 1.20 L16.10 8.40 A7.6 7.6 0 0 0 8.50 16.00 Z" fill="#a0a0a0"/><path d="M16.1 1.1999999999999993 V8.4 M16.1 23.6 V30.8 M1.3000000000000007 16 H8.500000000000002 M23.700000000000003 16 H30.900000000000002" stroke="#d8d8d8" stroke-width="1.1"/></g><g transform="translate(286,298)"><path d="M16.10 1.20 A14.8 14.8 0 0 1 30.90 16.00 L23.70 16.00 A7.6 7.6 0 0 0 16.10 8.40 Z" fill="#ff0a0a"/><path d="M30.90 16.00 A14.8 14.8 0 0 1 16.10 30.80 L16.10 23.60 A7.6 7.6 0 0 0 23.70 16.00 Z" fill="#ff0a0a"/><path d="M16.10 30.80 A14.8 14.8 0 0 1 1.30 16.00 L8.50 16.00 A7.6 7.6 0 0 0 16.10 23.60 Z" fill="#ff0a0a"/><path d="M1.30 16.00 A14.8 14.8 0 0 1 16.10 1.20 L16.10 8.40 A7.6 7.6 0 0 0 8.50 16.00 Z" fill="#a0a0a0"/><path d="M16.1 1.1999999999999993 V8.4 M16.1 23.6 V30.8 M1.3000000000000007 16 H8.500000000000002 M23.700000000000003 16 H30.900000000000002" stroke="#d8d8d8" stroke-width="1.1"/></g><g transform="translate(326,298)"><path d="M16.10 1.20 A14.8 14.8 0 0 1 30.90 16.00 L23.70 16.00 A7.6 7.6 0 0 0 16.10 8.40 Z" fill="#ff0a0a"/><path d="M30.90 16.00 A14.8 14.8 0 0 1 16.10 30.80 L16.10 23.60 A7.6 7.6 0 0 0 23.70 16.00 Z" fill="#ff0a0a"/><path d="M16.10 30.80 A14.8 14.8 0 0 1 1.30 16.00 L8.50 16.00 A7.6 7.6 0 0 0 16.10 23.60 Z" fill="#ff0a0a"/><path d="M1.30 16.00 A14.8 14.8 0 0 1 16.10 1.20 L16.10 8.40 A7.6 7.6 0 0 0 8.50 16.00 Z" fill="#ff0a0a"/><path d="M16.1 1.1999999999999993 V8.4 M16.1 23.6 V30.8 M1.3000000000000007 16 H8.500000000000002 M23.700000000000003 16 H30.900000000000002" stroke="#ff8a80" stroke-width="1.1"/></g><g transform="translate(6,334)"><circle cx="15.7" cy="15.6" r="14.6" fill="url(#gsm)" stroke="#1a1a08" stroke-width="1.7"/><ellipse cx="11.6" cy="11.8" rx="1.9" ry="2.9" fill="#0a0a00"/><ellipse cx="19.9" cy="11.8" rx="1.9" ry="2.9" fill="#0a0a00"/><path d="M6.8 18 Q15.7 29 24.6 18" fill="none" stroke="#1a1a08" stroke-width="1.3"/></g><g transform="translate(46,334)"><circle cx="15.7" cy="15.6" r="14.6" fill="url(#gsm)" stroke="#1a1a08" stroke-width="1.7"/><ellipse cx="11.6" cy="11.8" rx="1.9" ry="2.9" fill="#0a0a00"/><ellipse cx="19.9" cy="11.8" rx="1.9" ry="2.9" fill="#0a0a00"/><path d="M9 21.6 H22.6" stroke="#1a1a08" stroke-width="1.3"/></g><g transform="translate(86,334)"><circle cx="15.7" cy="15.6" r="14.6" fill="url(#gsm)" stroke="#1a1a08" stroke-width="1.7"/><ellipse cx="11.6" cy="11.8" rx="1.9" ry="2.9" fill="#0a0a00"/><ellipse cx="19.9" cy="11.8" rx="1.9" ry="2.9" fill="#0a0a00"/><circle cx="15.7" cy="22" r="3.6" fill="#f6e428" stroke="#1a1a08" stroke-width="1.2"/></g><g transform="translate(126,334)"><circle cx="15.7" cy="15.6" r="14.6" fill="url(#gsm)" stroke="#1a1a08" stroke-width="1.7"/><ellipse cx="11.6" cy="11.8" rx="1.9" ry="2.9" fill="#0a0a00"/><ellipse cx="19.9" cy="11.8" rx="1.9" ry="2.9" fill="#0a0a00"/><path d="M7.8 7.6 L14 11 M23.6 7.6 L17.4 11" stroke="#0a0a00" stroke-width="1.6"/><path d="M9.6 21.4 H21.8 M9.6 20.2 V23.4 M21.8 20.2 V23.4" stroke="#0a0a00" stroke-width="1.8"/></g><g transform="translate(166,334)"><circle cx="15.7" cy="15.6" r="14.6" fill="url(#gsm)" stroke="#1a1a08" stroke-width="1.7"/><ellipse cx="11.6" cy="11.8" rx="1.9" ry="2.9" fill="#0a0a00"/><ellipse cx="19.9" cy="11.8" rx="1.9" ry="2.9" fill="#0a0a00"/><path d="M8 24.4 Q15.7 14 23.6 24.4" fill="none" stroke="#1a1a08" stroke-width="1.3"/></g><g transform="translate(206,334)"><g transform="translate(-1.5 0) scale(0.68)"><path d="M6.4 30 C5.4 24 8 20 12.6 19.4 L16 23.4 L19.4 19.4 C24 20 26.6 24 25.6 30 Q16 33.4 6.4 30 Z" fill="url(#ps1)" stroke="#1c7a1c" stroke-width="0.6"/><path d="M14 19.6 L16 23 L18 19.6 Z" fill="#fff"/><path d="M16 23 V31" stroke="#1c7a1c" stroke-width="0.7"/><ellipse cx="16" cy="13.4" rx="6.4" ry="6.8" fill="#efb468" stroke="#b07828" stroke-width="0.5"/><path d="M7 14.6 C4.6 5 10.6 0.3 16 0.3 C21.4 0.3 27.4 5 25 14.6 C24.2 13 23.4 11.6 22.6 10.8 C19 11.4 14 10.6 11.6 9.2 C10 10.4 8 12.4 7 14.6 Z" fill="url(#ph1)" stroke="#000" stroke-width="0.5"/></g><g transform="translate(11 5) scale(0.72)"><path d="M6.4 30 C5.4 24 8 20 12.6 19.4 L16 23.4 L19.4 19.4 C24 20 26.6 24 25.6 30 Q16 33.4 6.4 30 Z" fill="url(#ps2)" stroke="#8a1c8a" stroke-width="0.6"/><path d="M14 19.6 L16 23 L18 19.6 Z" fill="#fff"/><path d="M16 23 V31" stroke="#8a1c8a" stroke-width="0.7"/><path d="M16 0.6 C22.4 0.6 25.6 5 25.6 10 C25.6 14 24.6 17.4 22.4 19.4 H9.6 C7.4 17.4 6.4 14 6.4 10 C6.4 5 9.6 0.6 16 0.6 Z" fill="url(#ph2)" stroke="#7e1c08" stroke-width="0.6"/><ellipse cx="16" cy="14.8" rx="5.6" ry="5.8" fill="#efb468"/><path d="M10.2 13 Q16 10.6 21.8 13 L22 9 Q16 4 10 9 Z" fill="url(#ph2)"/></g><g transform="translate(6.4 14) scale(0.5)"><path d="M6.4 30 C5.4 24 8 20 12.6 19.4 L16 23.4 L19.4 19.4 C24 20 26.6 24 25.6 30 Q16 33.4 6.4 30 Z" fill="url(#ps3)" stroke="#d0387a" stroke-width="0.6"/><path d="M14 19.6 L16 23 L18 19.6 Z" fill="#fff"/><path d="M16 23 V31" stroke="#d0387a" stroke-width="0.7"/><path d="M16 0.6 C22.4 0.6 25.6 5 25.6 10 C25.6 14 24.6 17.4 22.4 19.4 H9.6 C7.4 17.4 6.4 14 6.4 10 C6.4 5 9.6 0.6 16 0.6 Z" fill="url(#ph3)" stroke="#b08a14" stroke-width="0.6"/><ellipse cx="16" cy="14.8" rx="5.6" ry="5.8" fill="#efb468"/><path d="M10.2 13 Q16 10.6 21.8 13 L22 9 Q16 4 10 9 Z" fill="url(#ph3)"/></g></g><g transform="translate(246,334)"><g transform="translate(0 0) scale(1.0)"><path d="M6.4 30 C5.4 24 8 20 12.6 19.4 L16 23.4 L19.4 19.4 C24 20 26.6 24 25.6 30 Q16 33.4 6.4 30 Z" fill="url(#ps4)" stroke="#8a1c8a" stroke-width="0.6"/><path d="M14 19.6 L16 23 L18 19.6 Z" fill="#fff"/><path d="M16 23 V31" stroke="#8a1c8a" stroke-width="0.7"/><path d="M16 0.6 C22.4 0.6 25.6 5 25.6 10 C25.6 14 24.6 17.4 22.4 19.4 H9.6 C7.4 17.4 6.4 14 6.4 10 C6.4 5 9.6 0.6 16 0.6 Z" fill="url(#ph4)" stroke="#7e1c08" stroke-width="0.6"/><ellipse cx="16" cy="14.8" rx="5.6" ry="5.8" fill="#efb468"/><path d="M10.2 13 Q16 10.6 21.8 13 L22 9 Q16 4 10 9 Z" fill="url(#ph4)"/></g></g><g transform="translate(286,334)"><g transform="translate(0 0) scale(1.0)"><path d="M6.4 30 C5.4 24 8 20 12.6 19.4 L16 23.4 L19.4 19.4 C24 20 26.6 24 25.6 30 Q16 33.4 6.4 30 Z" fill="url(#ps5)" stroke="#b01010" stroke-width="0.6"/><path d="M14 19.6 L16 23 L18 19.6 Z" fill="#fff"/><path d="M16 23 V31" stroke="#b01010" stroke-width="0.7"/><path d="M16 0.4 C23 0.4 26 5 26 10 C26 14 26.4 18 24 21 L20.4 20 L11.6 20 L8 21 C5.6 18 6 14 6 10 C6 5 9 0.4 16 0.4 Z" fill="url(#ph5)" stroke="#b08a14" stroke-width="0.6"/><ellipse cx="16" cy="14.8" rx="5.6" ry="5.8" fill="#efb468"/><path d="M10.2 13 Q16 10.6 21.8 13 L22 9 Q16 4 10 9 Z" fill="url(#ph5)"/></g></g><g transform="translate(326,334)"><g transform="translate(-2.6 0.5) scale(0.72)"><path d="M6.4 30 C5.4 24 8 20 12.6 19.4 L16 23.4 L19.4 19.4 C24 20 26.6 24 25.6 30 Q16 33.4 6.4 30 Z" fill="url(#ps6)" stroke="#8a1c8a" stroke-width="0.6"/><path d="M14 19.6 L16 23 L18 19.6 Z" fill="#fff"/><path d="M16 23 V31" stroke="#8a1c8a" stroke-width="0.7"/><path d="M16 0.6 C22.4 0.6 25.6 5 25.6 10 C25.6 14 24.6 17.4 22.4 19.4 H9.6 C7.4 17.4 6.4 14 6.4 10 C6.4 5 9.6 0.6 16 0.6 Z" fill="url(#ph6)" stroke="#7e1c08" stroke-width="0.6"/><ellipse cx="16" cy="14.8" rx="5.6" ry="5.8" fill="#efb468"/><path d="M10.2 13 Q16 10.6 21.8 13 L22 9 Q16 4 10 9 Z" fill="url(#ph6)"/></g><g transform="translate(10 7) scale(0.76)"><path d="M6.4 30 C5.4 24 8 20 12.6 19.4 L16 23.4 L19.4 19.4 C24 20 26.6 24 25.6 30 Q16 33.4 6.4 30 Z" fill="url(#ps7)" stroke="#b01010" stroke-width="0.6"/><path d="M14 19.6 L16 23 L18 19.6 Z" fill="#fff"/><path d="M16 23 V31" stroke="#b01010" stroke-width="0.7"/><path d="M16 0.4 C23 0.4 26 5 26 10 C26 14 26.4 18 24 21 L20.4 20 L11.6 20 L8 21 C5.6 18 6 14 6 10 C6 5 9 0.4 16 0.4 Z" fill="url(#ph7)" stroke="#b08a14" stroke-width="0.6"/><ellipse cx="16" cy="14.8" rx="5.6" ry="5.8" fill="#efb468"/><path d="M10.2 13 Q16 10.6 21.8 13 L22 9 Q16 4 10 9 Z" fill="url(#ph7)"/></g></g><g transform="translate(6,370)"><g transform="translate(0 0) scale(1.0)"><path d="M6.4 30 C5.4 24 8 20 12.6 19.4 L16 23.4 L19.4 19.4 C24 20 26.6 24 25.6 30 Q16 33.4 6.4 30 Z" fill="url(#ps8)" stroke="#0c5e7c" stroke-width="0.6"/><path d="M14 19.6 L16 23 L18 19.6 Z" fill="#fff"/><path d="M16 23 V31" stroke="#0c5e7c" stroke-width="0.7"/><ellipse cx="16" cy="13.4" rx="6.4" ry="6.8" fill="#efb468" stroke="#b07828" stroke-width="0.5"/><path d="M7 14.6 C4.6 5 10.6 0.3 16 0.3 C21.4 0.3 27.4 5 25 14.6 C24.2 13 23.4 11.6 22.6 10.8 C19 11.4 14 10.6 11.6 9.2 C10 10.4 8 12.4 7 14.6 Z" fill="url(#ph8)" stroke="#6e3a08" stroke-width="0.5"/></g></g><g transform="translate(46,370)"><g transform="translate(0 0) scale(1.0)"><path d="M6.4 30 C5.4 24 8 20 12.6 19.4 L16 23.4 L19.4 19.4 C24 20 26.6 24 25.6 30 Q16 33.4 6.4 30 Z" fill="url(#ps9)" stroke="#1c7a1c" stroke-width="0.6"/><path d="M14 19.6 L16 23 L18 19.6 Z" fill="#fff"/><path d="M16 23 V31" stroke="#1c7a1c" stroke-width="0.7"/><ellipse cx="16" cy="13.4" rx="6.4" ry="6.8" fill="#efb468" stroke="#b07828" stroke-width="0.5"/><path d="M7 14.6 C4.6 5 10.6 0.3 16 0.3 C21.4 0.3 27.4 5 25 14.6 C24.2 13 23.4 11.6 22.6 10.8 C19 11.4 14 10.6 11.6 9.2 C10 10.4 8 12.4 7 14.6 Z" fill="url(#ph9)" stroke="#000" stroke-width="0.5"/></g></g><g transform="translate(86,370)"><g transform="translate(-1.4 0) scale(0.74)"><path d="M6.4 30 C5.4 24 8 20 12.6 19.4 L16 23.4 L19.4 19.4 C24 20 26.6 24 25.6 30 Q16 33.4 6.4 30 Z" fill="url(#ps10)" stroke="#1c7a1c" stroke-width="0.6"/><path d="M14 19.6 L16 23 L18 19.6 Z" fill="#fff"/><path d="M16 23 V31" stroke="#1c7a1c" stroke-width="0.7"/><ellipse cx="16" cy="13.4" rx="6.4" ry="6.8" fill="#efb468" stroke="#b07828" stroke-width="0.5"/><path d="M7 14.6 C4.6 5 10.6 0.3 16 0.3 C21.4 0.3 27.4 5 25 14.6 C24.2 13 23.4 11.6 22.6 10.8 C19 11.4 14 10.6 11.6 9.2 C10 10.4 8 12.4 7 14.6 Z" fill="url(#ph10)" stroke="#000" stroke-width="0.5"/></g><g transform="translate(9 5.4) scale(0.8)"><path d="M6.4 30 C5.4 24 8 20 12.6 19.4 L16 23.4 L19.4 19.4 C24 20 26.6 24 25.6 30 Q16 33.4 6.4 30 Z" fill="url(#ps11)" stroke="#0c5e7c" stroke-width="0.6"/><path d="M14 19.6 L16 23 L18 19.6 Z" fill="#fff"/><path d="M16 23 V31" stroke="#0c5e7c" stroke-width="0.7"/><ellipse cx="16" cy="13.4" rx="6.4" ry="6.8" fill="#efb468" stroke="#b07828" stroke-width="0.5"/><path d="M7 14.6 C4.6 5 10.6 0.3 16 0.3 C21.4 0.3 27.4 5 25 14.6 C24.2 13 23.4 11.6 22.6 10.8 C19 11.4 14 10.6 11.6 9.2 C10 10.4 8 12.4 7 14.6 Z" fill="url(#ph11)" stroke="#6e3a08" stroke-width="0.5"/></g></g><g transform="translate(126,370)"><g transform="translate(-2 0) scale(0.7)"><path d="M6.4 30 C5.4 24 8 20 12.6 19.4 L16 23.4 L19.4 19.4 C24 20 26.6 24 25.6 30 Q16 33.4 6.4 30 Z" fill="url(#ps12)" stroke="#0c1c8a" stroke-width="0.6"/><path d="M14 19.6 L16 23 L18 19.6 Z" fill="#fff"/><path d="M16 23 V31" stroke="#0c1c8a" stroke-width="0.7"/><ellipse cx="16" cy="13.4" rx="6.4" ry="6.8" fill="#efb468" stroke="#b07828" stroke-width="0.5"/><path d="M7 14.6 C4.6 5 10.6 0.3 16 0.3 C21.4 0.3 27.4 5 25 14.6 C24.2 13 23.4 11.6 22.6 10.8 C19 11.4 14 10.6 11.6 9.2 C10 10.4 8 12.4 7 14.6 Z" fill="url(#ph12)" stroke="#000" stroke-width="0.5"/></g><g transform="translate(9 7.6) scale(0.74)"><path d="M6.4 30 C5.4 24 8 20 12.6 19.4 L16 23.4 L19.4 19.4 C24 20 26.6 24 25.6 30 Q16 33.4 6.4 30 Z" fill="url(#ps13)" stroke="#b01010" stroke-width="0.6"/><path d="M14 19.6 L16 23 L18 19.6 Z" fill="#fff"/><path d="M16 23 V31" stroke="#b01010" stroke-width="0.7"/><path d="M16 0.4 C23 0.4 26 5 26 10 C26 14 26.4 18 24 21 L20.4 20 L11.6 20 L8 21 C5.6 18 6 14 6 10 C6 5 9 0.4 16 0.4 Z" fill="url(#ph13)" stroke="#b08a14" stroke-width="0.6"/><ellipse cx="16" cy="14.8" rx="5.6" ry="5.8" fill="#efb468"/><path d="M10.2 13 Q16 10.6 21.8 13 L22 9 Q16 4 10 9 Z" fill="url(#ph13)"/></g></g><g transform="translate(166,370)"><g transform="translate(-2.4 0) scale(0.62)"><path d="M6.4 30 C5.4 24 8 20 12.6 19.4 L16 23.4 L19.4 19.4 C24 20 26.6 24 25.6 30 Q16 33.4 6.4 30 Z" fill="url(#ps14)" stroke="#0c1c8a" stroke-width="0.6"/><path d="M14 19.6 L16 23 L18 19.6 Z" fill="#fff"/><path d="M16 23 V31" stroke="#0c1c8a" stroke-width="0.7"/><ellipse cx="16" cy="13.4" rx="6.4" ry="6.8" fill="#efb468" stroke="#b07828" stroke-width="0.5"/><path d="M7 14.6 C4.6 5 10.6 0.3 16 0.3 C21.4 0.3 27.4 5 25 14.6 C24.2 13 23.4 11.6 22.6 10.8 C19 11.4 14 10.6 11.6 9.2 C10 10.4 8 12.4 7 14.6 Z" fill="url(#ph14)" stroke="#6e3a08" stroke-width="0.5"/></g><g transform="translate(14 3) scale(0.62)"><path d="M6.4 30 C5.4 24 8 20 12.6 19.4 L16 23.4 L19.4 19.4 C24 20 26.6 24 25.6 30 Q16 33.4 6.4 30 Z" fill="url(#ps15)" stroke="#1c7a1c" stroke-width="0.6"/><path d="M14 19.6 L16 23 L18 19.6 Z" fill="#fff"/><path d="M16 23 V31" stroke="#1c7a1c" stroke-width="0.7"/><ellipse cx="16" cy="13.4" rx="6.4" ry="6.8" fill="#efb468" stroke="#b07828" stroke-width="0.5"/><path d="M7 14.6 C4.6 5 10.6 0.3 16 0.3 C21.4 0.3 27.4 5 25 14.6 C24.2 13 23.4 11.6 22.6 10.8 C19 11.4 14 10.6 11.6 9.2 C10 10.4 8 12.4 7 14.6 Z" fill="url(#ph15)" stroke="#000" stroke-width="0.5"/></g><g transform="translate(4.6 8) scale(0.72)"><path d="M6.4 30 C5.4 24 8 20 12.6 19.4 L16 23.4 L19.4 19.4 C24 20 26.6 24 25.6 30 Q16 33.4 6.4 30 Z" fill="url(#ps16)" stroke="#8a1c8a" stroke-width="0.6"/><path d="M14 19.6 L16 23 L18 19.6 Z" fill="#fff"/><path d="M16 23 V31" stroke="#8a1c8a" stroke-width="0.7"/><path d="M16 0.6 C22.4 0.6 25.6 5 25.6 10 C25.6 14 24.6 17.4 22.4 19.4 H9.6 C7.4 17.4 6.4 14 6.4 10 C6.4 5 9.6 0.6 16 0.6 Z" fill="url(#ph16)" stroke="#7e1c08" stroke-width="0.6"/><ellipse cx="16" cy="14.8" rx="5.6" ry="5.8" fill="#efb468"/><path d="M10.2 13 Q16 10.6 21.8 13 L22 9 Q16 4 10 9 Z" fill="url(#ph16)"/></g></g><g transform="translate(206,370)"><ellipse cx="16.1" cy="7.2" rx="3.9" ry="7.4" transform="rotate(22.5 16.1 15.4)" fill="url(#gfl)" stroke="#0c8c0c" stroke-width="0.6"/><ellipse cx="16.1" cy="7.2" rx="3.9" ry="7.4" transform="rotate(67.5 16.1 15.4)" fill="url(#gfl)" stroke="#0c8c0c" stroke-width="0.6"/><ellipse cx="16.1" cy="7.2" rx="3.9" ry="7.4" transform="rotate(112.5 16.1 15.4)" fill="url(#gfl)" stroke="#0c8c0c" stroke-width="0.6"/><ellipse cx="16.1" cy="7.2" rx="3.9" ry="7.4" transform="rotate(157.5 16.1 15.4)" fill="url(#gfl)" stroke="#0c8c0c" stroke-width="0.6"/><ellipse cx="16.1" cy="7.2" rx="3.9" ry="7.4" transform="rotate(202.5 16.1 15.4)" fill="url(#gfl)" stroke="#0c8c0c" stroke-width="0.6"/><ellipse cx="16.1" cy="7.2" rx="3.9" ry="7.4" transform="rotate(247.5 16.1 15.4)" fill="url(#gfl)" stroke="#0c8c0c" stroke-width="0.6"/><ellipse cx="16.1" cy="7.2" rx="3.9" ry="7.4" transform="rotate(292.5 16.1 15.4)" fill="url(#gfl)" stroke="#0c8c0c" stroke-width="0.6"/><ellipse cx="16.1" cy="7.2" rx="3.9" ry="7.4" transform="rotate(337.5 16.1 15.4)" fill="url(#gfl)" stroke="#0c8c0c" stroke-width="0.6"/><circle cx="16.1" cy="15.4" r="3.6" fill="#f4d818" stroke="#c09a0a" stroke-width="0.6"/></g><g transform="translate(246,370)"><ellipse cx="15.6" cy="18" rx="10" ry="12.6" fill="#111"/><circle cx="15.6" cy="6.6" r="6" fill="#111"/><ellipse cx="15.6" cy="20" rx="6.8" ry="9.6" fill="#fff"/><ellipse cx="15.6" cy="9" rx="3.6" ry="3" fill="#fff"/><ellipse cx="13.8" cy="5.8" rx="1.3" ry="1.6" fill="#fff"/><ellipse cx="17.4" cy="5.8" rx="1.3" ry="1.6" fill="#fff"/><circle cx="14" cy="6" r="0.6" fill="#000"/><circle cx="17.2" cy="6" r="0.6" fill="#000"/><path d="M12.4 8.4 Q15.6 6.4 18.8 8.4 Q15.6 12 12.4 8.4 Z" fill="#f4b818"/><path d="M0.6 27.4 C2 24 5 21.6 8 22.4 C10.6 24 12 27.6 11.6 29.6 C8 31.6 2 31.4 0.6 27.4 Z" fill="#f4c018"/><path d="M31.6 27.4 C30.2 24 26.6 21.6 23.6 22.4 C21 24 20.4 27.6 20.6 29.6 C24 31.6 30.2 31.4 31.6 27.4 Z" fill="#f4c018"/></g><g transform="translate(286,370)"><path d="M15.8 13.6 C12 8 5 3.4 0.8 3.8 C0.8 9 3 14.6 8 16.6 C4.6 18.6 3.6 23 6.4 26.4 C10 27.4 14.4 23 15.8 17.6 C17.2 23 21.6 27.4 25.2 26.4 C28 23 27 18.6 23.6 16.6 C28.6 14.6 30.8 9 30.8 3.8 C26.6 3.4 19.6 8 15.8 13.6 Z" fill="url(#gbf)" stroke="#8a3c0c" stroke-width="1"/><path d="M15.8 13.6 L3 6 M15.8 13.6 L28.6 6 M15.8 16 L7 23 M15.8 16 L24.6 23" stroke="#a84c10" stroke-width="0.7"/><path d="M15.8 10 V21" stroke="#5a2408" stroke-width="1.6" stroke-linecap="round"/></g><g transform="translate(326,370)"><ellipse cx="10" cy="8" rx="8.4" ry="5.2" transform="rotate(40 10 8)" fill="#fff" stroke="#000" stroke-width="1.5"/><ellipse cx="22.4" cy="23.4" rx="8.4" ry="5.4" transform="rotate(48 22.4 23.4)" fill="#fff" stroke="#000" stroke-width="1.5"/><ellipse cx="8" cy="24" rx="7.6" ry="6" transform="rotate(-15 8 24)" fill="#f4cc28" stroke="#000" stroke-width="1.5"/><path d="M5 18.6 Q8 23 6 29.6 M10 18.2 Q13 23 11.4 29.4" stroke="#000" stroke-width="2" fill="none"/><circle cx="21" cy="12.4" r="5" fill="#000"/><path d="M20.4 8 C20.8 4 19.6 2.4 18.4 1.6 M25 13 C28 12 29.4 13.6 28.8 16" stroke="#000" stroke-width="1.6" fill="none" stroke-linecap="round"/><circle cx="15.4" cy="16.4" r="2.6" fill="#000"/></g><g transform="translate(6,406)"><rect x="1.6" y="0.8" width="29" height="29.4" rx="3.4" fill="#9ccaf8"/><rect x="2.8" y="2" width="26.6" height="27" rx="2.6" fill="#fff2e4" stroke="#2468e0" stroke-width="1.7"/><text x="13.4" y="9" font-family="Liberation Sans, sans-serif" font-size="4.6" fill="#666">12</text><text x="24.6" y="17.4" font-family="Liberation Sans, sans-serif" font-size="4.6" fill="#666">3</text><text x="14.4" y="27" font-family="Liberation Sans, sans-serif" font-size="4.6" fill="#666">6</text><text x="4.6" y="17.4" font-family="Liberation Sans, sans-serif" font-size="4.6" fill="#666">9</text><path d="M15.6 15.4 L21.4 7 M15.6 15.4 L20.4 19.6" stroke="#26268a" stroke-width="1.4"/><path d="M15.6 15.4 L6.6 20.6" stroke="#e03030" stroke-width="0.9"/><circle cx="15.6" cy="15.4" r="1.4" fill="#c02040"/></g><g transform="translate(46,406)"><path d="M0.6 5.6 L26.2 1.2 L30.4 23 Q17 25 3.6 30 Z" fill="#fdfd54" stroke="#8a8a24" stroke-width="1"/><circle cx="14.6" cy="4.6" r="4.7" fill="#1ccc1c"/><circle cx="13.2" cy="3.2" r="1.6" fill="#7af07a"/></g><g transform="translate(86,406)"><path d="M9.2 3.6 H22 C22 10 17.4 12.6 17 15.4 C17.4 18 22 20.6 22 26.6 H9.2 C9.2 20.6 13.8 18 14.2 15.4 C13.8 12.6 9.2 10 9.2 3.6 Z" fill="#a8d2f4" stroke="#6a8ab0" stroke-width="0.8"/><path d="M11 8 H20.2 C19 11 16.6 12.6 15.6 15 C14.6 12.6 12.2 11 11 8 Z" fill="#f2c468"/><path d="M10 26.4 C10.6 22.6 14 21 15.6 19.6 C17.2 21 20.6 22.6 21.2 26.4 Z" fill="#f2c468"/><rect x="7.3" y="0.5" width="16.4" height="3.3" rx="1" fill="#8e5a34"/><rect x="7.3" y="26.4" width="16.4" height="3.6" rx="1" fill="#8e5a34"/><rect x="8" y="1.2" width="15" height="1" fill="#d0a070"/><rect x="8" y="27.2" width="15" height="1" fill="#d0a070"/></g><g transform="translate(126,406)"><path d="M1.6 3.8 H29.4 V29.6 H2.6 Z" fill="url(#gcal)" stroke="#4a6ad0" stroke-width="0.9"/><path d="M23 29.6 L29.4 23 V29.6 Z" fill="#2a4ad0"/><path d="M23.4 24 L26.8 24.4 L23.8 27.6 Z" fill="#fff"/><rect x="5.0" y="1.6" width="2.2" height="5.6" rx="1" fill="#e0a838" stroke="#a07018" stroke-width="0.5"/><rect x="11.3" y="1.6" width="2.2" height="5.6" rx="1" fill="#e0a838" stroke="#a07018" stroke-width="0.5"/><rect x="17.6" y="1.6" width="2.2" height="5.6" rx="1" fill="#e0a838" stroke="#a07018" stroke-width="0.5"/><rect x="23.9" y="1.6" width="2.2" height="5.6" rx="1" fill="#e0a838" stroke="#a07018" stroke-width="0.5"/><text x="4.6" y="21.8" font-family="Liberation Serif, serif" font-weight="bold" font-size="17.5" fill="#b81c24" textLength="21.6" lengthAdjust="spacingAndGlyphs">12</text></g><g transform="translate(166,406)"><clipPath id="cclip"><rect x="0" y="0" width="32" height="32"/></clipPath><g clip-path="url(#cclip)"><g transform="translate(1.2 1.6) rotate(42 16 16)" fill="none" stroke="#204848" stroke-width="2.9" stroke-linejoin="miter"><path d="M-3 8 H28 L34.4 15.8 L28 23.6 H1 V13.2 H25.4 L27.6 15.8 L25.4 18.4 H6"/></g></g></g><g transform="translate(206,406)"><path d="M13 5.6 C13 0.6 22 -0.2 22.6 5" fill="none" stroke="#7a7428" stroke-width="2"/><path d="M0.4 6.4 L31.4 4.8 V24.4 L7.8 31.6 L0.4 27.4 Z" fill="url(#gbc)" stroke="#050510" stroke-width="1.3" stroke-linejoin="round"/><path d="M7.8 9.6 V31.6 M0.4 6.4 L7.8 9.6 L31.4 4.8" fill="none" stroke="#050510" stroke-width="1"/><path d="M0.6 6.6 L3.6 7.8 V10 L0.6 9 Z M28.4 5.2 L31.2 5 V8.4 L28.4 8.8 Z M0.6 24.6 L3.6 26 V29 L0.6 27.2 Z M28.6 22 L31.2 21.4 V24.2 L28.6 25 Z M7.8 28 L10.6 27.2 V30.6 L7.8 31.4 Z" fill="#b06820"/><rect x="16.8" y="6.6" width="2.8" height="8.4" fill="#e4c058" stroke="#5a4a10" stroke-width="0.6"/></g><g transform="translate(246,406)"><rect x="3.6" y="0.8" width="24.2" height="29.8" fill="url(#gls)" stroke="#5a7cc8" stroke-width="1.3"/><circle cx="8.4" cy="6.4" r="1.9" fill="#e02828"/><rect x="12" y="5.5" width="12.2" height="1.9" fill="#2a6cdc"/><circle cx="8.4" cy="12" r="1.9" fill="#e02828"/><rect x="12" y="11.1" width="12.2" height="1.9" fill="#2a6cdc"/><circle cx="8.4" cy="17.7" r="1.9" fill="#e02828"/><rect x="12" y="16.8" width="12.2" height="1.9" fill="#2a6cdc"/><circle cx="8.4" cy="23.3" r="1.9" fill="#e02828"/><rect x="12" y="22.400000000000002" width="12.2" height="1.9" fill="#2a6cdc"/></g><g transform="translate(286,406)"><path d="M0.6 1.2 H18 L24.2 7.6 V31.4 H0.6 Z" fill="#fbfbfb" stroke="#8c8c8c" stroke-width="1.2"/><path d="M14 22 L26 16 L24.2 31 L8 31.2 Z" fill="#e2e2e2" opacity="0.8"/><path d="M15.6 0.4 L21.4 1.6 L12.2 20.6 L7.6 18.4 Z" fill="url(#gpn)"/><path d="M7.6 18.4 L12.2 20.6 L6.4 27.2 Z" fill="#d8d4cc"/><path d="M7 24 L8.6 24.8 L6.4 27.2 Z" fill="#555"/></g><g transform="translate(326,406)"><path d="M22.4 1.6 C27.6 0 31 4 30.6 9 C30 19 21 28.4 9.4 30.4 C4 31.4 0.6 29 1.6 25.6 L9.6 19.6 C12.6 20.6 12.6 23 11.6 24.6 C18 22.4 22.6 16 23.4 11.4 C21.4 11.6 19 11 18.6 8.4 Z" fill="url(#gph)" stroke="#0a1c7a" stroke-width="0.8"/><path d="M23.4 3 C26.6 2.4 28.6 5 28.4 8" fill="none" stroke="#8ab0ff" stroke-width="1.2"/></g><g transform="translate(6,442)"><path d="M1 2.6 Q1 0.6 3 0.6 H11.6 L14 3.6 H30.4 V27.6 L1 30.8 Z" fill="#5c88e8" stroke="#1c3ca8" stroke-width="0.8"/><path d="M1 11 L9.4 10.4 L12 7 L30.4 6 V27.6 L1 30.8 Z" fill="url(#gfo)" stroke="#1c3ca8" stroke-width="0.8"/><path d="M7.8 20.4 L25.6 18.8 V24.6 L7.8 26.2 Z" fill="#dceafc"/></g><g transform="translate(46,442)"><rect x="0.4" y="21.8" width="30.8" height="9.6" fill="#3c6ca4"/><path d="M1.4 14 L11.4 0.8 L18.4 6 L6.8 24.6 Z" fill="#f4f4f4" stroke="#222" stroke-width="0.9"/><path d="M1.4 14 L14 10 L11.4 0.8 M14 10 L6.8 24.6" fill="none" stroke="#222" stroke-width="0.7"/><path d="M16.4 2.6 L22 0.4 L30.4 4.4 V25 L24 27 L16.4 20.6 Z" fill="#f29a34" stroke="#a05a10" stroke-width="0.7"/><path d="M16.4 8.4 L24 12 L30.4 10 M16.4 14.4 L24 18.4 L30.4 16.4 M24 6.4 V27 M19.6 10 V16 M27.4 5.4 V11" stroke="#a05a10" stroke-width="0.8" fill="none"/><rect x="18" y="15.4" width="4.4" height="2.6" fill="#fbe0a0" transform="skewY(25) translate(0 -8.6)"/></g><g transform="translate(86,442)"><rect x="0.9" y="0.6" width="30.6" height="29.8" fill="url(#gml)" stroke="#444" stroke-width="1.2"/><path d="M0.9 0.8 L16 17.8 L31.5 0.8 M0.9 30.2 L12.6 14.2 M31.5 30.2 L19.6 14.2" fill="none" stroke="#4a4a4a" stroke-width="0.9"/></g><g transform="translate(126,442)"><path d="M5.6 13 V9.4 Q5.6 2.2 12.8 2.2 H19.6 Q26.8 2.2 26.8 9.4 V14.6 M26.8 20 V22 Q26.8 28.8 19.6 28.8 H12.8 Q5.6 28.8 5.6 22 V19.6" fill="none" stroke="#0a0ae6" stroke-width="3.2"/><path d="M0.8 19.4 L4.4 13.6 L8 19.4 Z M24.4 14.2 L28 20 L31.6 14.2 Z" fill="#fff" stroke="#0a0ae6" stroke-width="1.3" stroke-linejoin="round"/><text x="9.8" y="22.6" font-family="Liberation Sans, sans-serif" font-weight="bold" font-size="19" fill="#0a0ae6" textLength="13.4" lengthAdjust="spacingAndGlyphs">R</text></g><g transform="translate(166,442)"><path d="M5.6 13 V9.4 Q5.6 2.2 12.8 2.2 H19.6 Q26.8 2.2 26.8 9.4 V14.6 M26.8 20 V22 Q26.8 28.8 19.6 28.8 H12.8 Q5.6 28.8 5.6 22 V19.6" fill="none" stroke="#0a8a0e" stroke-width="3.2"/><path d="M0.8 19.4 L4.4 13.6 L8 19.4 Z M24.4 14.2 L28 20 L31.6 14.2 Z" fill="#fff" stroke="#0a8a0e" stroke-width="1.3" stroke-linejoin="round"/><text x="9.8" y="22.6" font-family="Liberation Sans, sans-serif" font-weight="bold" font-size="19" fill="#0a8a0e" textLength="13.4" lengthAdjust="spacingAndGlyphs">R</text></g><g transform="translate(206,442)"><path d="M5.6 13 V9.4 Q5.6 2.2 12.8 2.2 H19.6 Q26.8 2.2 26.8 9.4 V14.6 M26.8 20 V22 Q26.8 28.8 19.6 28.8 H12.8 Q5.6 28.8 5.6 22 V19.6" fill="none" stroke="#8c0ac8" stroke-width="3.2"/><path d="M0.8 19.4 L4.4 13.6 L8 19.4 Z M24.4 14.2 L28 20 L31.6 14.2 Z" fill="#fff" stroke="#8c0ac8" stroke-width="1.3" stroke-linejoin="round"/><text x="9.8" y="22.6" font-family="Liberation Sans, sans-serif" font-weight="bold" font-size="19" fill="#8c0ac8" textLength="13.4" lengthAdjust="spacingAndGlyphs">R</text></g><g transform="translate(246,442)"><path d="M5.6 13 V9.4 Q5.6 2.2 12.8 2.2 H19.6 Q26.8 2.2 26.8 9.4 V14.6 M26.8 20 V22 Q26.8 28.8 19.6 28.8 H12.8 Q5.6 28.8 5.6 22 V19.6" fill="none" stroke="#e20e0e" stroke-width="3.2"/><path d="M0.8 19.4 L4.4 13.6 L8 19.4 Z M24.4 14.2 L28 20 L31.6 14.2 Z" fill="#fff" stroke="#e20e0e" stroke-width="1.3" stroke-linejoin="round"/><text x="9.8" y="22.6" font-family="Liberation Sans, sans-serif" font-weight="bold" font-size="19" fill="#e20e0e" textLength="13.4" lengthAdjust="spacingAndGlyphs">R</text></g><g transform="translate(286,442)"><rect x="0.4" y="0.2" width="30.6" height="30.6" fill="#123f3b"/><rect x="2.2" y="1.9" width="3.5" height="3.5" fill="#fff"/><rect x="2.2" y="25.7" width="3.5" height="3.5" fill="#fff"/><rect x="8.2" y="1.9" width="3.5" height="3.5" fill="#fff"/><rect x="8.2" y="25.7" width="3.5" height="3.5" fill="#fff"/><rect x="14.2" y="1.9" width="3.5" height="3.5" fill="#fff"/><rect x="14.2" y="25.7" width="3.5" height="3.5" fill="#fff"/><rect x="20.2" y="1.9" width="3.5" height="3.5" fill="#fff"/><rect x="20.2" y="25.7" width="3.5" height="3.5" fill="#fff"/><rect x="26.2" y="1.9" width="3.5" height="3.5" fill="#fff"/><rect x="26.2" y="25.7" width="3.5" height="3.5" fill="#fff"/><rect x="3.4" y="7.4" width="24.8" height="16.4" fill="url(#fg2)"/><path d="M13.4 10 V21 L21.2 15.5 Z" fill="#000"/></g><g transform="translate(326,442)"><path d="M0.4 11.8 H4.8 L16.2 0.4 V30.8 L4.8 21.8 H0.4 Z" fill="url(#gau)" stroke="#333" stroke-width="0.6"/><rect x="14.6" y="0.4" width="1.8" height="30.4" fill="#222"/><path d="M20 7.4 A11 11 0 0 1 20 24.4 M25 3.6 A16.6 16.6 0 0 1 25 28" fill="none" stroke="#1c5ca8" stroke-width="2.7" stroke-linecap="round"/></g><g transform="translate(6,478)"><polygon points="12.6,0.6 19.6,0.6 18.8,4.7 22.1,6.1 24.4,2.6 29.3,7.5 25.8,9.8 27.2,13.1 31.3,12.3 31.3,19.3 27.2,18.5 25.8,21.8 29.3,24.1 24.4,29.0 22.1,25.5 18.8,26.9 19.6,31.0 12.6,31.0 13.4,26.9 10.1,25.5 7.8,29.0 2.9,24.1 6.4,21.8 5.0,18.5 0.9,19.3 0.9,12.3 5.0,13.1 6.4,9.8 2.9,7.5 7.8,2.6 10.1,6.1 13.4,4.7" fill="url(#ggr)" stroke="#2c4ca8" stroke-width="1.1" stroke-linejoin="round"/><circle cx="16.1" cy="15.8" r="4.4" fill="#f6f6f6" stroke="#2c4ca8" stroke-width="1.1"/></g><g transform="translate(46,478)"><rect x="0.6" y="0.8" width="30" height="30.4" fill="#fdfdfd" stroke="#2c443c" stroke-width="1.2"/><rect x="3.4" y="3.8" width="24.4" height="24.2" fill="url(#gim)" stroke="#2c4c5c" stroke-width="0.8"/><path d="M27.8 9 C22 9.6 18 15 10.4 17.4 H27.8 Z" fill="#2c8a2c"/><rect x="3.8" y="17.4" width="23.6" height="10.2" fill="#3a78d0"/><rect x="3.8" y="17.4" width="23.6" height="3" fill="#8cbcf0" opacity="0.7"/><circle cx="8.8" cy="10.4" r="3.2" fill="#ffffe0"/><circle cx="8.8" cy="10.4" r="1.8" fill="#fff"/></g><g transform="translate(86,478)"><circle cx="15.7" cy="15.8" r="15.5" fill="url(#ggl)"/><path d="M6.4 4.4 C8 1.6 13 0.4 17.6 1 C16 3 18.4 4.6 16.6 6.6 C15 7 14.6 9.4 15.6 11.6 C13.6 11 12.4 9 10.6 8.4 C10 6 8 5.6 6.4 4.4 Z" fill="#2c9c2c" stroke="#1c7a1c" stroke-width="0.5"/><path d="M16.6 14.6 C19 12.8 23 13.6 25.6 16 C27 18.6 25 21 23 23 C21.6 25.4 20.6 28.4 18.6 29.8 C18 26.4 18.6 23.6 17.4 21 C15.6 19 15.4 16 16.6 14.6 Z" fill="#2c9c2c" stroke="#1c7a1c" stroke-width="0.5"/></g><g transform="translate(126,478)"><circle cx="15.7" cy="15.8" r="15.5" fill="url(#ggl)"/><path d="M6.4 4.4 C8 1.6 13 0.4 17.6 1 C16 3 18.4 4.6 16.6 6.6 C15 7 14.6 9.4 15.6 11.6 C13.6 11 12.4 9 10.6 8.4 C10 6 8 5.6 6.4 4.4 Z" fill="#2c9c2c" stroke="#1c7a1c" stroke-width="0.5"/><path d="M16.6 14.6 C19 12.8 23 13.6 25.6 16 C27 18.6 25 21 23 23 C21.6 25.4 20.6 28.4 18.6 29.8 C18 26.4 18.6 23.6 17.4 21 C15.6 19 15.4 16 16.6 14.6 Z" fill="#2c9c2c" stroke="#1c7a1c" stroke-width="0.5"/><path d="M21 13.6 L31.2 30.4 H10.8 Z" fill="#ffe040" stroke="#e8901c" stroke-width="1.3" stroke-linejoin="round"/><path d="M20.2 18.6 H21.8 L21.5 25.6 H20.5 Z" fill="#111"/><circle cx="21" cy="27.8" r="1" fill="#111"/></g><g transform="translate(166,478)"><path d="M16.3 16.9 L8.8 3.3" stroke="#e02828" stroke-width="1.3"/><path d="M16.3 16.9 L23.8 4.300000000000001" stroke="#3c2c9c" stroke-width="1.3"/><path d="M16.3 16.9 L7.8 15.299999999999999" stroke="#1c1c8c" stroke-width="1.3"/><path d="M16.3 16.9 L23.8 16.1" stroke="#f08a3a" stroke-width="1.3"/><path d="M16.3 16.9 L9.2 28.2" stroke="#e040b0" stroke-width="1.3"/><path d="M16.3 16.9 L23.8 28.2" stroke="#3c9c4c" stroke-width="1.3"/><rect x="1.6" y="1.2" width="7.2" height="4.2" rx="1" fill="#fff" stroke="#e02828" stroke-width="1"/><rect x="23.8" y="2.2" width="7.2" height="4.2" rx="1" fill="#fff" stroke="#3c2c9c" stroke-width="1"/><rect x="1" y="13.2" width="6.8" height="4.2" rx="1" fill="#fff" stroke="#6a9a7a" stroke-width="1"/><rect x="23.8" y="13.8" width="7.2" height="4.6" rx="1" fill="#fff" stroke="#f08a3a" stroke-width="1"/><rect x="1.6" y="25.9" width="7.6" height="4.6" rx="1" fill="#fff" stroke="#e040b0" stroke-width="1"/><rect x="23.8" y="25.9" width="7.2" height="4.6" rx="1" fill="#fff" stroke="#3c9c4c" stroke-width="1"/><circle cx="16.3" cy="16.9" r="5" fill="#fff" stroke="#1c1c8c" stroke-width="1.2"/></g><g transform="translate(206,478)"><path d="M4.6 3 C3.6 2 2.4 1.2 0.8 1.6 C2 3.4 2.8 5 2.8 7 V28.4 H8.8 V17 C8.8 10.4 12.6 7.4 17 7.4 C21.6 7.4 24.6 10.6 24.6 16.4 C24.6 22 22 25.4 18.6 25.4 C16.6 25.4 15.6 24.4 15 23 L11 26 C12.6 28.8 15.4 30.2 19 30.2 C26 30.2 31.4 24.4 31.4 15.8 C31.4 7 26 0.8 18 0.8 C14 0.8 10.6 2.4 8.6 5 Z" fill="#0b0b86"/><path d="M8.8 17 C8.8 10.4 12.6 7.4 17 7.4 C21.6 7.4 24.6 10.6 24.6 16.4 C24.6 22 22 25.4 18.6 25.4 C16.6 25.4 15.6 24.4 15 23 L11 26 L8.8 28 Z" fill="#ffc9a6"/></g><g transform="translate(246,478)"><path d="M14.6 1.2 L31.2 30.4" stroke="#0a0a0a" stroke-width="2"/><circle cx="14.7" cy="1.3" r="1.3" fill="#8a4a1a"/><path d="M0.7 13.6 C4.5 7.5 9.5 10 15.2 3.6 L18.5 9.7 C12.6 16 7.6 14.4 3.8 20.8 Z" fill="#fbfbfb"/><path d="M3.8 20.8 C7.6 14.4 12.6 16 18.5 9.7 L21.7 15.6 C15.8 22 10.6 21 6.8 28.2 Z" fill="#0c0c0c"/><path d="M0.7 13.6 C4.5 7.5 9.5 10 15.2 3.6 L21.7 15.6 C15.8 22 10.6 21 6.8 28.2 Z" fill="none" stroke="#0a0a0a" stroke-width="1"/></g><g transform="translate(286,478)"><path d="M14.6 1.2 L31.2 30.4" stroke="#0a0a0a" stroke-width="2"/><circle cx="14.7" cy="1.3" r="1.3" fill="#8a4a1a"/><path d="M0.7 13.6 C4.5 7.5 9.5 10 15.2 3.6 L18.5 9.7 C12.6 16 7.6 14.4 3.8 20.8 Z" fill="#fbfbfb"/><path d="M3.8 20.8 C7.6 14.4 12.6 16 18.5 9.7 L21.7 15.6 C15.8 22 10.6 21 6.8 28.2 Z" fill="#1418c8"/><path d="M0.7 13.6 C4.5 7.5 9.5 10 15.2 3.6 L21.7 15.6 C15.8 22 10.6 21 6.8 28.2 Z" fill="none" stroke="#0a0a0a" stroke-width="1"/></g><g transform="translate(326,478)"><path d="M14.6 1.2 L31.2 30.4" stroke="#0a0a0a" stroke-width="2"/><circle cx="14.7" cy="1.3" r="1.3" fill="#8a4a1a"/><path d="M0.7 13.6 C4.5 7.5 9.5 10 15.2 3.6 L18.5 9.7 C12.6 16 7.6 14.4 3.8 20.8 Z" fill="#fbfbfb"/><path d="M3.8 20.8 C7.6 14.4 12.6 16 18.5 9.7 L21.7 15.6 C15.8 22 10.6 21 6.8 28.2 Z" fill="#1cc42c"/><path d="M0.7 13.6 C4.5 7.5 9.5 10 15.2 3.6 L21.7 15.6 C15.8 22 10.6 21 6.8 28.2 Z" fill="none" stroke="#0a0a0a" stroke-width="1"/></g><g transform="translate(6,514)"><path d="M14.6 1.2 L31.2 30.4" stroke="#0a0a0a" stroke-width="2"/><circle cx="14.7" cy="1.3" r="1.3" fill="#8a4a1a"/><path d="M0.7 13.6 C4.5 7.5 9.5 10 15.2 3.6 L18.5 9.7 C12.6 16 7.6 14.4 3.8 20.8 Z" fill="#fbfbfb"/><path d="M3.8 20.8 C7.6 14.4 12.6 16 18.5 9.7 L21.7 15.6 C15.8 22 10.6 21 6.8 28.2 Z" fill="#f47a1c"/><path d="M0.7 13.6 C4.5 7.5 9.5 10 15.2 3.6 L21.7 15.6 C15.8 22 10.6 21 6.8 28.2 Z" fill="none" stroke="#0a0a0a" stroke-width="1"/></g><g transform="translate(46,514)"><path d="M14.6 1.2 L31.2 30.4" stroke="#0a0a0a" stroke-width="2"/><circle cx="14.7" cy="1.3" r="1.3" fill="#8a4a1a"/><path d="M0.7 13.6 C4.5 7.5 9.5 10 15.2 3.6 L18.5 9.7 C12.6 16 7.6 14.4 3.8 20.8 Z" fill="#fbfbfb"/><path d="M3.8 20.8 C7.6 14.4 12.6 16 18.5 9.7 L21.7 15.6 C15.8 22 10.6 21 6.8 28.2 Z" fill="#b41cb4"/><path d="M0.7 13.6 C4.5 7.5 9.5 10 15.2 3.6 L21.7 15.6 C15.8 22 10.6 21 6.8 28.2 Z" fill="none" stroke="#0a0a0a" stroke-width="1"/></g><g transform="translate(86,514)"><path d="M14.6 1.2 L31.2 30.4" stroke="#0a0a0a" stroke-width="2"/><circle cx="14.7" cy="1.3" r="1.3" fill="#8a4a1a"/><path d="M0.7 13.6 C4.5 7.5 9.5 10 15.2 3.6 L18.5 9.7 C12.6 16 7.6 14.4 3.8 20.8 Z" fill="#fbfbfb"/><path d="M3.8 20.8 C7.6 14.4 12.6 16 18.5 9.7 L21.7 15.6 C15.8 22 10.6 21 6.8 28.2 Z" fill="#d81420"/><path d="M0.7 13.6 C4.5 7.5 9.5 10 15.2 3.6 L21.7 15.6 C15.8 22 10.6 21 6.8 28.2 Z" fill="none" stroke="#0a0a0a" stroke-width="1"/></g><g transform="translate(126,514)"><path d="M14.6 1.2 L31.2 30.4" stroke="#0a0a0a" stroke-width="2"/><circle cx="14.7" cy="1.3" r="1.3" fill="#8a4a1a"/><path d="M0.7 13.6 C4.5 7.5 9.5 10 15.2 3.6 L18.5 9.7 C12.6 16 7.6 14.4 3.8 20.8 Z" fill="#fbfbfb"/><path d="M3.8 20.8 C7.6 14.4 12.6 16 18.5 9.7 L21.7 15.6 C15.8 22 10.6 21 6.8 28.2 Z" fill="#f8f820"/><path d="M0.7 13.6 C4.5 7.5 9.5 10 15.2 3.6 L21.7 15.6 C15.8 22 10.6 21 6.8 28.2 Z" fill="none" stroke="#0a0a0a" stroke-width="1"/></g><g transform="translate(166,514)"><g transform="rotate(0 16 16)"><path d="M0.6 9.8 H16.4 V1.4 L31.6 16 L16.4 30.4 V21.8 H0.6 Z" fill="url(#garr)" stroke="#2c4ca0" stroke-width="0.8" stroke-linejoin="round"/></g></g><g transform="translate(206,514)"><g transform="rotate(180 16 16)"><path d="M0.6 9.8 H16.4 V1.4 L31.6 16 L16.4 30.4 V21.8 H0.6 Z" fill="url(#garl)" stroke="#2c4ca0" stroke-width="0.8" stroke-linejoin="round"/></g></g><g transform="translate(246,514)"><g transform="rotate(-90 16 16)"><path d="M0.6 9.8 H16.4 V1.4 L31.6 16 L16.4 30.4 V21.8 H0.6 Z" fill="url(#garu)" stroke="#2c4ca0" stroke-width="0.8" stroke-linejoin="round"/></g></g><g transform="translate(286,514)"><g transform="rotate(90 16 16)"><path d="M0.6 9.8 H16.4 V1.4 L31.6 16 L16.4 30.4 V21.8 H0.6 Z" fill="url(#gard)" stroke="#2c4ca0" stroke-width="0.8" stroke-linejoin="round"/></g></g><g transform="translate(326,514)"><path d="M11 0.4 H19.9 V11.3 H31 V19.8 H19.9 V30.6 H11 V19.8 H0.5 V11.3 H11 Z" fill="url(#gpb)"/></g><g transform="translate(6,550)"><rect x="1.2" y="11.1" width="28.6" height="8.8" fill="url(#gpb)"/></g><g transform="translate(46,550)"><path d="M0.6 3 H10.6 L15.6 10.6 L20.6 3 H30.4 L20.6 15.4 L30.8 28 H20.6 L15.6 20.4 L10.6 28 H0.4 L10.6 15.4 Z" fill="url(#gpb)"/></g><g transform="translate(86,550)"><rect x="1.2" y="11.6" width="28.5" height="6.9" fill="url(#gpb)"/><circle cx="15.4" cy="5.8" r="2.9" fill="#0f58d4"/><circle cx="15.4" cy="24.1" r="2.9" fill="#0f58d4"/></g><g transform="translate(126,550)"><path d="M7.8 10.6 V21.2 L25.8 15.9 Z" fill="#e20c0c"/></g><g transform="translate(166,550)"><path d="M7.8 10.6 V21.2 L25.8 15.9 Z" fill="#0c9a10"/></g><g transform="translate(206,550)"><text x="16.1" y="23" text-anchor="middle" font-family="Liberation Sans, sans-serif" font-weight="bold" font-size="26.5" fill="#8a8a08" stroke="#8a8a08" stroke-width="1.1">@</text></g><g transform="translate(246,550)"><rect x="17" y="4.8" width="13.4" height="22.2" fill="#fff" stroke="#2c7c3c" stroke-width="1"/><path d="M19 8 H26.6 V11 H28.6 L25.4 14.4 L22.2 11 H24.2 V10 H19 Z M18.6 18.6 H23 V16.4 L27.4 20 L23 23.6 V21.4 H18.6 Z" fill="#2c7c3c"/><path d="M0.9 4.8 L18.3 1.1 V30.6 L0.9 26.9 Z" fill="#2c7c3c"/><text x="9.6" y="21.4" text-anchor="middle" font-family="Liberation Sans, sans-serif" font-weight="bold" font-size="15" fill="#fff" textLength="8.4" lengthAdjust="spacingAndGlyphs">P</text></g><g transform="translate(286,550)"><rect x="17" y="4.8" width="13.4" height="22.2" fill="#fff" stroke="#2c5aa8" stroke-width="1"/><rect x="19.4" y="7.4" width="8.8" height="1.5" fill="#2c5aa8"/><rect x="19.4" y="10.4" width="8.8" height="1.5" fill="#2c5aa8"/><rect x="19.4" y="13.4" width="8.8" height="1.5" fill="#2c5aa8"/><rect x="19.4" y="16.4" width="8.8" height="1.5" fill="#2c5aa8"/><rect x="19.4" y="19.4" width="8.8" height="1.5" fill="#2c5aa8"/><rect x="19.4" y="22.4" width="8.8" height="1.5" fill="#2c5aa8"/><path d="M0.9 4.8 L18.3 1.1 V30.6 L0.9 26.9 Z" fill="#2c5aa8"/><text x="9.6" y="21.4" text-anchor="middle" font-family="Liberation Sans, sans-serif" font-weight="bold" font-size="15" fill="#fff" textLength="11" lengthAdjust="spacingAndGlyphs">W</text></g><g transform="translate(326,550)"><rect x="17" y="4.8" width="13.4" height="22.2" fill="#fff" stroke="#80328c" stroke-width="1"/><rect x="19.4" y="7.6" width="6.6" height="1.5" fill="#80328c"/><rect x="19.4" y="10.8" width="6.6" height="1.5" fill="#80328c"/><rect x="19.4" y="14" width="6.6" height="1.5" fill="#80328c"/><rect x="19.4" y="17.2" width="6.6" height="1.5" fill="#80328c"/><rect x="19.4" y="20.4" width="6.6" height="1.5" fill="#80328c"/><rect x="19.4" y="23.6" width="6.6" height="1.5" fill="#80328c"/><path d="M27.6 6 H30.4 M27.6 11.4 H30.4 M27.6 16.8 H30.4 M27.6 22 H30.4" stroke="#80328c" stroke-width="0.9"/><rect x="27.2" y="5" width="0.9" height="22" fill="#80328c"/><path d="M0.9 4.8 L18.3 1.1 V30.6 L0.9 26.9 Z" fill="#80328c"/><text x="9.6" y="21.4" text-anchor="middle" font-family="Liberation Sans, sans-serif" font-weight="bold" font-size="15" fill="#fff" textLength="9.4" lengthAdjust="spacingAndGlyphs">N</text></g><g transform="translate(6,586)"><rect x="15" y="8.6" width="16.4" height="14" fill="#fff" stroke="#0f72c8" stroke-width="1.2"/><path d="M15 9 L23.6 16.8 L31.4 9" fill="none" stroke="#0f72c8" stroke-width="1.2"/><path d="M0.9 4.8 L18.3 1.1 V30.6 L0.9 26.9 Z" fill="#0f72c8"/><text x="9.6" y="21.4" text-anchor="middle" font-family="Liberation Sans, sans-serif" font-weight="bold" font-size="15" fill="#fff" textLength="9.6" lengthAdjust="spacingAndGlyphs">O</text></g><g transform="translate(46,586)"><path d="M16 6.6 C16 3.4 30.6 3.4 30.6 6.6 V25.4 C30.6 28.6 16 28.6 16 25.4 Z" fill="#fff" stroke="#a4373a" stroke-width="1.1"/><path d="M16 6.6 C16 9.8 30.6 9.8 30.6 6.6 M16 12.8 C16 16 30.6 16 30.6 12.8 M16 19 C16 22.2 30.6 22.2 30.6 19" fill="none" stroke="#a4373a" stroke-width="1.1"/><path d="M0.9 4.8 L18.3 1.1 V30.6 L0.9 26.9 Z" fill="#a4373a"/><text x="9.6" y="21.4" text-anchor="middle" font-family="Liberation Sans, sans-serif" font-weight="bold" font-size="15" fill="#fff" textLength="9.8" lengthAdjust="spacingAndGlyphs">A</text></g><g transform="translate(86,586)"><rect x="17" y="4.8" width="13.4" height="22.2" fill="#fff" stroke="#d04727" stroke-width="1"/><circle cx="24" cy="12.4" r="3.8" fill="none" stroke="#d04727" stroke-width="1.2"/><path d="M24 8.6 V12.4 H27.8" fill="none" stroke="#d04727" stroke-width="1.2"/><rect x="19.8" y="19" width="8.4" height="1.4" fill="#d04727"/><rect x="19.8" y="22" width="8.4" height="1.4" fill="#d04727"/><path d="M0.9 4.8 L18.3 1.1 V30.6 L0.9 26.9 Z" fill="#d04727"/><text x="9.6" y="21.4" text-anchor="middle" font-family="Liberation Sans, sans-serif" font-weight="bold" font-size="15" fill="#fff" textLength="8.4" lengthAdjust="spacingAndGlyphs">P</text></g><g transform="translate(126,586)"><rect x="17" y="4.8" width="13.4" height="22.2" fill="#fff" stroke="#3955a3" stroke-width="1"/><rect x="22.4" y="7" width="6" height="5" fill="none" stroke="#3955a3" stroke-width="1.1"/><path d="M21.6 20.4 L24.6 17.2 L27.6 20.4 L24.6 23.6 Z" fill="none" stroke="#3955a3" stroke-width="1.1"/><path d="M25.4 12 V17" stroke="#3955a3" stroke-width="1"/><path d="M0.9 4.8 L18.3 1.1 V30.6 L0.9 26.9 Z" fill="#3955a3"/><text x="9.6" y="21.4" text-anchor="middle" font-family="Liberation Sans, sans-serif" font-weight="bold" font-size="15" fill="#fff" textLength="9.4" lengthAdjust="spacingAndGlyphs">V</text></g><g transform="translate(166,586)"><rect x="17" y="4.8" width="13.4" height="22.2" fill="#fff" stroke="#1e7145" stroke-width="1"/><rect x="20" y="7" width="3.8" height="2.2" fill="#1e7145"/><rect x="20" y="10.6" width="3.8" height="2.2" fill="#1e7145"/><rect x="20" y="14.2" width="3.8" height="2.2" fill="#1e7145"/><rect x="20" y="17.8" width="3.8" height="2.2" fill="#1e7145"/><rect x="20" y="21.4" width="3.8" height="2.2" fill="#1e7145"/><rect x="25" y="7" width="3.8" height="2.2" fill="#1e7145"/><rect x="25" y="10.6" width="3.8" height="2.2" fill="#1e7145"/><rect x="25" y="14.2" width="3.8" height="2.2" fill="#1e7145"/><rect x="25" y="17.8" width="3.8" height="2.2" fill="#1e7145"/><rect x="25" y="21.4" width="3.8" height="2.2" fill="#1e7145"/><path d="M0.9 4.8 L18.3 1.1 V30.6 L0.9 26.9 Z" fill="#1e7145"/><text x="9.6" y="21.4" text-anchor="middle" font-family="Liberation Sans, sans-serif" font-weight="bold" font-size="15" fill="#fff" textLength="9.2" lengthAdjust="spacingAndGlyphs">X</text></g><g transform="translate(206,586)"><polygon points="16.1,0.0 30.0,8.0 30.0,24.0 16.1,32.0 2.2,24.0 2.2,8.0" fill="#cd6799"/><text x="16.4" y="19.6" text-anchor="middle" font-family="Liberation Serif, serif" font-style="italic" font-weight="bold" font-size="12.5" fill="#fff" textLength="22" lengthAdjust="spacingAndGlyphs">Sass</text><path d="M6 22 C4 25 8 26 9.6 22.6" fill="none" stroke="#fff" stroke-width="1.1"/></g><g transform="translate(246,586)"><path d="M3.6 0.3 H21.3 L28.3 7.3 V31.3 H3.6 Z" fill="#e9e9e7" stroke="#cfcfcc" stroke-width="0.6"/><path d="M21.3 0.3 L28.3 7.3 H21.3 Z" fill="#c4c4c0"/><path d="M11.4 6.6 L6.6 11.6 L11.4 16.6 M20.6 6.6 L25.4 11.6 L20.6 16.6 M18 4.6 L14 18.6" fill="none" stroke="#3b4be8" stroke-width="2.4"/><rect x="3.6" y="22.7" width="24.7" height="8.7" fill="#3b4be8"/><text x="15.950000000000001" y="30.3" text-anchor="middle" font-family="Liberation Sans, sans-serif" font-weight="bold" font-size="9.6" fill="#fff" stroke="#3a3a3a" stroke-width="0.7" stroke-opacity="0.6" paint-order="stroke" textLength="19" lengthAdjust="spacingAndGlyphs">XSD</text></g><g transform="translate(286,586)"><g transform="rotate(-6 16 17)"><rect x="1.8" y="6" width="28.6" height="23.6" rx="3" fill="url(#gxc)" stroke="#2a76c8" stroke-width="0.6"/><path d="M8 27 L15.6 9 L20 19 M10.6 21.6 H22" fill="none" stroke="#a8d4fa" stroke-width="0.9"/></g><path d="M22.6 8 L17 30.6" stroke="#1a1a1e" stroke-width="3.4" stroke-linecap="round"/><path d="M20 6.4 L26.6 9.4 L25.8 12 L19.4 9.2 Z" fill="#5a5a62"/></g><g transform="translate(326,586)"><path d="M2 0.2 H30 L27.6 27 L16 31.3 L4.4 27 Z" fill="#f2c42a"/><path d="M16 0.2 H30 L27.6 27 L16 31.3 Z" fill="#f6d23c"/><text x="16" y="24.6" text-anchor="middle" font-family="Liberation Sans, sans-serif" font-weight="bold" font-size="21" fill="#1c1c1c" textLength="20.5" lengthAdjust="spacingAndGlyphs">JS</text></g><g transform="translate(6,622)"><text x="15.9" y="26.6" text-anchor="middle" font-family="Liberation Sans, sans-serif" font-weight="bold" font-size="26.5" fill="#d4d9de" stroke="#1b76c4" stroke-width="4.4" paint-order="stroke" stroke-linejoin="round" textLength="26.5" lengthAdjust="spacingAndGlyphs">TS</text></g><g transform="translate(46,622)"><path d="M9.6 0.8 H17.6 Q22.6 0.8 22.6 5.8 V12.6 Q22.6 16.4 18.6 16.4 H11.6 Q7.6 16.4 7.6 20.6 V23.4 H4.8 Q0.6 23.4 0.6 18.4 V14 Q0.6 9 5.6 9 H15.6 V7.6 H7.4 V3.4 Q7.4 0.8 9.6 0.8 Z" fill="#3a78b0"/><circle cx="11.2" cy="4.6" r="1.4" fill="#fff"/><path d="M22.4 31.4 H14.4 Q9.4 31.4 9.4 26.4 V19.8 Q9.4 16 13.4 16 H20.4 Q24.4 16 24.4 11.8 V9 H27.2 Q31.4 9 31.4 14 V18.4 Q31.4 23.4 26.4 23.4 H16.4 V24.8 H24.6 V29 Q24.6 31.4 22.4 31.4 Z" fill="#fcd03c"/><circle cx="20.8" cy="27.8" r="1.4" fill="#fff"/></g><g transform="translate(86,622)"><rect x="0.4" y="0.2" width="31.4" height="31.4" rx="7.4" fill="#f05138"/><path d="M20.4 4.4 C26 9 28.6 15.6 26.6 21.4 C28.4 23.6 28.6 26 28 27 C26.6 24.8 24.6 25 23.6 25.6 C18 28.6 9 27.4 2.8 19.6 C8 23 14 24 18.6 21.4 C12.6 17 7.6 10.4 5.6 7.4 C10 11.4 15 15 17 16 C13.6 12.6 10.6 8.4 9.4 6.4 C14 10.6 19.4 15 22.4 16.8 C23.6 13.4 23 8.6 20.4 4.4 Z" fill="#fff"/></g><g transform="translate(126,622)"><path d="M4.1 0.3 H21.4 L28.4 7.3 V31.3 H4.1 Z" fill="#e9e9e7" stroke="#cfcfcc" stroke-width="0.6"/><path d="M21.4 0.3 L28.4 7.3 H21.4 Z" fill="#c4c4c0"/><path d="M9.6 12.6 H21 V17 C21 21 18.6 22 15.4 22 C12 22 9.6 21 9.6 17 Z" fill="#000"/><ellipse cx="15.3" cy="12.6" rx="5.7" ry="1.3" fill="#000"/><ellipse cx="15.3" cy="12.4" rx="4.4" ry="0.7" fill="#666"/><path d="M21 14 C24.6 13 24.6 18.4 20.4 18.6" fill="none" stroke="#000" stroke-width="1.5"/><path d="M15.4 10.4 C13.4 8 17.4 6.4 15.4 3.4 C18 5.6 15 8 16.6 10.4 Z" fill="#000"/><rect x="4.1" y="22.7" width="24.299999999999997" height="8.7" fill="#6a1b9a"/><text x="16.25" y="30.3" text-anchor="middle" font-family="Liberation Sans, sans-serif" font-weight="bold" font-size="9.2" fill="#fff" stroke="#3a3a3a" stroke-width="0.7" stroke-opacity="0.6" paint-order="stroke" textLength="20.6" lengthAdjust="spacingAndGlyphs">JAVA</text></g><g transform="translate(166,622)"><defs><clipPath id="cbb"><circle cx="15.8" cy="15.8" r="15.6"/></clipPath></defs><g clip-path="url(#cbb)"><rect x="0" y="0" width="32" height="32" fill="#fcd45a"/><path d="M13.1 8.6 C6 6 1.4 9 -1 14 V-1 H8 C10 2 12 5 13.1 8.6 Z" fill="#7ab2f2"/><path d="M13.1 8.6 C10 4 9 1 9.4 -1 H20 C16 2 14 5 13.1 8.6 Z" fill="#f4485c"/><path d="M13.1 8.6 C15 4 19 1 23 0.4 C28 3 31 8 32 12 C26 7.6 18 7 13.1 8.6 Z" fill="#fcd45a"/><path d="M13.1 8.6 C14 3 18 0 22 -1 H16 C13 2 13 6 13.1 8.6Z" fill="#8ab8f4"/><path d="M13.1 8.6 C20 7 28 9 32.6 15 C32 26 24 32 15 32.4 C11 26 10 16 13.1 8.6 Z" fill="#f2304c"/><path d="M13.1 8.6 C7 10 2 15 0.4 21 C3 27 9 31.6 15 32.4 C11 26 10 16 13.1 8.6 Z" fill="#fcd45a"/><path d="M13.1 8.6 C6 7 1 10 -0.6 15 C0 18 0.2 20 0.4 21 C2 15 7 10 13.1 8.6 Z" fill="#7ab2f2"/></g><circle cx="13.1" cy="8.6" r="2.2" fill="#fff"/></g><g transform="translate(206,622)"><g transform="translate(16 16) scale(0.8 0.9) rotate(-24) translate(-16 -16)"><rect x="5" y="1.6" width="24" height="5.8" rx="2.9" fill="#fff" stroke="#555" stroke-width="0.9"/><rect x="5" y="7.6" width="19" height="3.2" fill="#5eb848"/><rect x="5" y="10.7" width="19" height="3.2" fill="#f6c228"/><rect x="5" y="13.8" width="19" height="3.2" fill="#f08a24"/><rect x="5" y="16.9" width="19" height="3.2" fill="#e04848"/><rect x="5" y="20.0" width="19" height="3.2" fill="#9a4cb0"/><rect x="5" y="23.1" width="19" height="3.2" fill="#2a9ad8"/><rect x="3" y="7" width="4.4" height="3.6" fill="#5eb848"/><rect x="2" y="26" width="22" height="5" rx="2.5" fill="#fff" stroke="#444" stroke-width="0.9"/></g></g><g transform="translate(246,622)"><polygon points="16.2,-0.2 30.1,7.8 30.1,23.8 16.2,31.8 2.3,23.8 2.3,7.8" fill="#5c9cd2"/><path d="M16.2 15.8 L30.06 7.8 V23.8 L16.2 31.8 L2.34 23.8 Z" fill="#0a4c8c"/><path d="M16.2 15.8 L30.06 7.8 V23.8 Z" fill="#2a6cac"/><path d="M24.5 11 A9.6 9.6 0 1 0 24.5 20.6 L20.3 18.2 A4.8 4.8 0 1 1 20.3 13.4 Z" fill="#fff"/><path d="M22 15.8 H25.2 M23.6 14.2 V17.4 M26.4 15.8 H29.6 M28 14.2 V17.4" stroke="#fff" stroke-width="0.9"/></g><g transform="translate(286,622)"><path d="M3.6 0.3 H21.3 L28.3 7.3 V31.3 H3.6 Z" fill="#e9e9e7" stroke="#cfcfcc" stroke-width="0.6"/><path d="M21.3 0.3 L28.3 7.3 H21.3 Z" fill="#c4c4c0"/><path d="M11.4 6.6 L6.6 11.6 L11.4 16.6 M20.6 6.6 L25.4 11.6 L20.6 16.6 M18 4.6 L14 18.6" fill="none" stroke="#d04a1a" stroke-width="2.4"/><rect x="3.6" y="22.7" width="24.7" height="8.7" fill="#c8501e"/><text x="15.950000000000001" y="30.3" text-anchor="middle" font-family="Liberation Sans, sans-serif" font-weight="bold" font-size="9.6" fill="#fff" stroke="#3a3a3a" stroke-width="0.7" stroke-opacity="0.6" paint-order="stroke" textLength="19" lengthAdjust="spacingAndGlyphs">XML</text></g><g transform="translate(326,622)"><path d="M8 3.4 H25 C27.6 3.4 27.6 7 25.4 7.4 V22 C25.4 24 27 24.4 28 24.4 V25.4 C28 27.6 26 28.6 24 28.6 H8.4 C5.6 28.6 5.4 25.4 7.6 24.6 V9 C7.6 7.6 6.4 7.4 4 7.4 C2.6 5.4 4 3.4 8 3.4 Z" fill="#f4f8fc" stroke="#2a8ad0" stroke-width="1.7" stroke-linejoin="round"/><path d="M7.6 24.6 H22 C23.6 24.6 23.6 27 24 28.4" fill="none" stroke="#2a8ad0" stroke-width="1.5"/><path d="M11 9 H22 M11 12.6 H22 M11 16.2 H22 M11 19.8 H22" stroke="#2a8ad0" stroke-width="1.6"/></g><g transform="translate(6,658)"><circle cx="17.2" cy="17.2" r="12.6" fill="#111"/><circle cx="16" cy="15.8" r="12.6" fill="#fff"/><g stroke="#2a8af0" stroke-width="3.4" stroke-linecap="round"><path d="M9.6 18.6 L12.6 11.6 M14.6 18.6 L17.6 11.6 M19.6 15 L21.6 11.6"/></g><circle cx="21.8" cy="18.8" r="1.9" fill="#2a8af0"/><circle cx="16.6" cy="19.4" r="1.2" fill="#2a8af0"/></g><g transform="translate(46,658)"><rect x="6.6" y="6.4" width="19.2" height="19.2" rx="1.6" transform="rotate(45 16.2 16)" fill="#f05033"/><path d="M13 7.6 L16.4 11 V22.4 M16.4 12 L21 16.6" fill="none" stroke="#fff" stroke-width="1.7"/><circle cx="16.4" cy="11.6" r="1.9" fill="#fff"/><circle cx="16.4" cy="22.2" r="1.9" fill="#fff"/><circle cx="21.2" cy="16.8" r="1.9" fill="#fff"/></g><g transform="translate(86,658)"><rect x="1.4" y="1.2" width="29.2" height="29.2" rx="2.6" fill="#060606" stroke="#d8a070" stroke-width="2.2"/><rect x="5.8" y="6" width="8.8" height="4.6" rx="1.2" fill="none" stroke="#d8d8d8" stroke-width="1"/><rect x="16.4" y="16.2" width="10.2" height="6.6" rx="0.8" fill="none" stroke="#d8d8d8" stroke-width="1"/><rect x="6.4" y="22.4" width="6.6" height="4.6" rx="1" fill="none" stroke="#d8d8d8" stroke-width="1"/><path d="M15.2 11.2 L17.4 14.2" stroke="#d8d8d8" stroke-width="1"/></g><g transform="translate(126,658)"><rect x="3.1" y="0.3" width="25.8" height="31" rx="4.4" fill="#3a6cc2"/><rect x="5.8" y="3.6" width="20.4" height="19" rx="1.6" fill="#f6f8fc"/><path d="M3.1 22.6 H8.6 L10.6 20.6 H21.4 L23.4 22.6 H28.9 V27 Q28.9 31.3 24.5 31.3 H7.5 Q3.1 31.3 3.1 27 Z" fill="#4a80d8"/><rect x="10.8" y="23.6" width="10.4" height="5" fill="#9aa8c4"/><rect x="10.8" y="23.6" width="10.4" height="1.6" fill="#c8d0e0"/><path d="M11.6 14 L14.8 17.2 L21.6 9.8" fill="none" stroke="#111" stroke-width="2"/></g><g transform="translate(166,658)"><path d="M9 22 C4 16 9 12 8.4 6 C12 9 11.4 13 12.6 15 C12.6 9 16.4 6 15.4 0.8 C20 5 19.4 11 19 14.4 C21 12 21.6 9.6 21 7.4 C25 12 24.6 18 21.4 22 Z" fill="url(#gfi)"/><path d="M12.6 22 C11 18 14 16 14.4 12.4 C17 15.4 17.4 19 16.4 22 Z" fill="#ffe89a"/><path d="M2 21.6 C6 18.6 26 18.6 29.8 21.6 C29 26.6 23 29 15.8 29 C8.6 29 3 26.6 2 21.6 Z" fill="#b48c60"/><ellipse cx="15.9" cy="21.8" rx="12" ry="2.4" fill="#7a5434"/><path d="M9 29 H22.6 L24 31.4 H7.6 Z" fill="#8a6440"/><path d="M8.6 23.6 H13" stroke="#5a3a20" stroke-width="1"/></g><g transform="translate(206,658)"><circle cx="15.6" cy="15.5" r="12.2" fill="#f1f5f9" stroke="#2a96f0" stroke-width="5.6"/><path d="M22.4 22.6 L30.4 30.4" stroke="#2a96f0" stroke-width="5"/><path d="M28 31.4 H32 V27.4 Z" fill="#2a96f0"/><path d="M15.4 16.4 L23.4 8.2" stroke="#2a96f0" stroke-width="4.4" stroke-linecap="round"/><circle cx="15.6" cy="15.5" r="8" fill="none" stroke="#dfe9f3" stroke-width="1.4"/><path d="M15.4 16.4 L23.4 8.2" stroke="#2a96f0" stroke-width="4.4" stroke-linecap="round"/></g><g transform="translate(246,658)"><g transform="rotate(-9 16 16.6)"><rect x="3.4" y="4.8" width="25.6" height="24" rx="2.6" fill="#dfeef6" stroke="#a8d4ec" stroke-width="0.8"/><rect x="3" y="3.4" width="25.6" height="23.6" rx="2.6" fill="#f6fcfe" stroke="#a8d8f0" stroke-width="1"/></g><path d="M6.4 17.6 C9 12 12 9.4 12.6 11 C13 13 8.6 18 10.6 18 C12.6 17.6 16 9.6 17.6 10.4 C18.6 12 14.6 17 16.4 17 C18.6 16.6 21.4 9 23 9.4 C24 11 21 15 22.6 15 C24 14.6 25 13 26 11.6" fill="none" stroke="#3ab0e0" stroke-width="1.9" stroke-linecap="round"/></g><g transform="translate(286,658)"><circle cx="15.7" cy="15.5" r="15.3" fill="url(#gec)"/><path d="M0.8 14.6 H30.6 M0.5 17 H30.9 M0.9 19.4 H30.5" stroke="#a4a4ea" stroke-width="0.9"/></g><g transform="translate(326,658)"><rect x="3.4" y="1.3" width="25.5" height="29" rx="2.6" fill="url(#gnw)"/><path d="M12 15 L7.8 6.5" stroke="#5c4c4a" stroke-width="1.5"/><path d="M12 15 L20.6 8.6" stroke="#5c4c4a" stroke-width="1.5"/><path d="M12 15 L25.2 16" stroke="#5c4c4a" stroke-width="1.5"/><path d="M12 15 L20 24" stroke="#5c4c4a" stroke-width="1.5"/><path d="M12 15 L7.8 24" stroke="#5c4c4a" stroke-width="1.5"/><circle cx="7.8" cy="6.5" r="2" fill="#5c4c4a"/><circle cx="20.6" cy="8.6" r="2" fill="#5c4c4a"/><circle cx="25.2" cy="16" r="2" fill="#5c4c4a"/><circle cx="20" cy="24" r="2" fill="#5c4c4a"/><circle cx="7.8" cy="24" r="2" fill="#5c4c4a"/><circle cx="12" cy="15" r="3.5" fill="#5c4c4a"/></g><g transform="translate(6,694)"><circle cx="16.1" cy="15.8" r="13" fill="#d8343a"/><path d="M6 26 C4 20 6 13 10.6 9.4 L11.6 6 C13 6.4 14 7.4 14.4 8.6 C18 8.4 21 10 23.6 13 L27.6 15.6 C27 18 25 19 22 18.6 C20 19 19 21 19.4 24 L20 27.6 C15 30 9.6 29 6 26 Z" fill="#fdfdfd"/><circle cx="26" cy="15.4" r="1" fill="#3a1a1a"/></g><g transform="translate(46,694)"><rect x="0.4" y="0" width="31.4" height="31.6" fill="url(#gad)"/><path d="M0.4 0 H13 L0.4 21.6 Z" fill="#1a70c8"/><path d="M20 0 L2 31.6 M13.6 11 L25 31.6 M9 20.4 H31.8 M8.6 20.4 L15.6 31.6" fill="none" stroke="#14489c" stroke-width="0.8"/></g><g transform="translate(86,694)"><rect x="0.4" y="0" width="31.4" height="31.6" fill="url(#gap)"/><path d="M0.4 0 H12 L0.4 20 Z" fill="#8a4cd8"/><path d="M12 0 L0.4 20 M13 0 L23.6 19.6 M31 0 L18.6 21 M8 11.6 H20 M0.4 20.4 H13 L19.6 31.6 M13 20 L6.6 31.6 M19 20.4 H31.8 M12 12 L8 19.6" fill="none" stroke="#7a2cc0" stroke-width="0.8"/></g><g transform="translate(126,694)"><rect x="0.2" y="0" width="31.6" height="31.6" fill="#ff3f94"/><rect x="3" y="2.8" width="26" height="26" fill="#49021f"/><text x="16.2" y="23.2" text-anchor="middle" font-family="Liberation Sans, sans-serif" font-weight="bold" font-size="21.5" fill="#ff5ca4" textLength="15.6" lengthAdjust="spacingAndGlyphs">Id</text></g><g transform="translate(166,694)"><path d="M6.8 1.6 H24.8 L31.6 11.6 L15.8 30 L0 11.6 Z" fill="#fdad00"/><path d="M6.8 1.6 L15.8 1.2 L24.8 1.6 L31.6 11.6 H0 Z" fill="#fdd231"/><path d="M6.8 1.6 L8.4 11.6 L15.8 1.2 L23.2 11.6 L24.8 1.6" fill="#feeeb7" opacity="0.55"/><path d="M8.4 11.6 H23.2 L15.8 30 Z" fill="#fec52e"/><path d="M0 11.6 H8.4 L15.8 30 Z M31.6 11.6 H23.2 L15.8 30 Z" fill="#ea6c00" opacity="0.35"/></g><g transform="translate(206,694)"><rect x="0.3" y="0" width="31.6" height="31.6" fill="#ff8e4c"/><path d="M0.3 0 H12.8 L0.3 21.4 Z" fill="#c8284c"/><path d="M12.8 0 L31.8 29.4 M16.6 0 L31.8 23 M9.6 5.6 L26.6 31.6 M6.4 11 L19.6 31.6 M3.4 16.4 L13 31.6" stroke="#c22038" stroke-width="0.9"/></g><g transform="translate(246,694)"><path d="M2 7 Q2 4.8 4 4.8 H10.4 L12.6 7 H28 Q29.8 7 29.8 9 V23.4 Q29.8 25.3 28 25.3 H4 Q2 25.3 2 23.4 Z" fill="#eca548" stroke="#c88a3a" stroke-width="0.7"/><path d="M2 14.6 H9.6 L12 12.4 H29.8 V23.4 Q29.8 25.3 28 25.3 H4 Q2 25.3 2 23.4 Z" fill="url(#gfy)"/><path d="M2.4 15.2 H9.8 L12.2 13 H29.4" fill="none" stroke="#fde2a8" stroke-width="0.9"/></g><g transform="translate(286,694)"><path d="M3.6 3.6 Q3.6 1.6 5.6 1.6 H11.6 L14 4.4 H27.4 Q29.4 4.4 29.4 6.4 V21.2 Q29.4 23.2 27.4 23.2 H5.6 Q3.6 23.2 3.6 21.2 Z" fill="#f5f066"/><path d="M3.6 10 H29.4" stroke="#f8f48c" stroke-width="1"/><rect x="14.4" y="23.2" width="3.4" height="4.2" fill="#c4c4c4"/><rect x="0.9" y="27" width="30.9" height="3" rx="0.8" fill="#bcbcbc"/><rect x="0.9" y="27" width="30.9" height="1" fill="#dedede"/><rect x="13" y="26" width="6.2" height="4.4" rx="1" fill="#c8c8c8"/></g><g transform="translate(326,694)"><g transform="translate(16.3 15.9) scale(0.9781021897810219)"><circle cx="0" cy="0" r="13.7" fill="url(#ggl2)" stroke="#1c3c2c" stroke-width="1"/><path d="M-9 -7 C-6 -10 -2 -9 -1 -6 C-3 -4 -2 -1 -5 0 C-8 -1 -10 -4 -9 -7 Z M1 -10 C4 -11 7 -9 8 -7 C6 -6 4 -7 3 -5 C1 -6 0 -8 1 -10 Z M3 3 C6 1 10 3 10 6 C8 8 6 7 4 8 C2 7 2 5 3 3 Z M-8 7 C-5 6 -2 8 -2 11 C-5 12 -8 10 -8 7 Z" fill="#3cb044"/></g><path d="M3 10 V6.6 C3 0.6 10.6 0.6 10.6 6.6 V10" fill="none" stroke="#9a9a9a" stroke-width="2.2"/><rect x="0.3" y="9.5" width="12.6" height="8" rx="1.2" fill="#f2b220" stroke="#a87810" stroke-width="0.7"/><rect x="6" y="11.6" width="1.6" height="3.8" fill="#3a2a08"/></g><g transform="translate(6,730)"><g transform="translate(15.8 15.5) scale(1.0)"><circle cx="0" cy="0" r="13.7" fill="url(#ggl2)" stroke="#1c3c2c" stroke-width="1"/><path d="M-9 -7 C-6 -10 -2 -9 -1 -6 C-3 -4 -2 -1 -5 0 C-8 -1 -10 -4 -9 -7 Z M1 -10 C4 -11 7 -9 8 -7 C6 -6 4 -7 3 -5 C1 -6 0 -8 1 -10 Z M3 3 C6 1 10 3 10 6 C8 8 6 7 4 8 C2 7 2 5 3 3 Z M-8 7 C-5 6 -2 8 -2 11 C-5 12 -8 10 -8 7 Z" fill="#3cb044"/></g></g><g transform="translate(46,730)"><path d="M3.5 0.3 H21.3 L28.3 7.3 V31.3 H3.5 Z" fill="#e9e9e7" stroke="#cfcfcc" stroke-width="0.6"/><path d="M21.3 0.3 L28.3 7.3 H21.3 Z" fill="#c4c4c0"/><rect x="8.7" y="5.5" width="4.2" height="4.2" fill="#f6d040"/><path d="M3.5 22.8 V18 L12.5 12 L16.5 15.4 L22.5 10.6 L28.3 15 V22.8 Z" fill="#7ab84c"/><rect x="3.5" y="22.7" width="24.8" height="8.7" fill="#5a8c1c"/><text x="15.9" y="30.3" text-anchor="middle" font-family="Liberation Sans, sans-serif" font-weight="bold" font-size="9.6" fill="#fff" stroke="#3a3a3a" stroke-width="0.7" stroke-opacity="0.6" paint-order="stroke" textLength="19" lengthAdjust="spacingAndGlyphs">PNG</text></g><g transform="translate(86,730)"><path d="M5.1 2.8 H20 L26.7 9.4 V28.7 H5.1 Z" fill="#f4f4f2" stroke="#c4c4c0" stroke-width="0.8"/><path d="M20 2.8 L26.7 9.4 H20 Z" fill="#c8c8c4"/><path d="M9 8.6 H16 M9 12.6 H22 M9 16.6 H17 M9 20.6 H15" stroke="#b0b0b0" stroke-width="1.6"/><g transform="translate(23.6 22.9) scale(0.5839416058394161)"><circle cx="0" cy="0" r="13.7" fill="url(#ggl2)" stroke="#1c3c2c" stroke-width="1"/><path d="M-9 -7 C-6 -10 -2 -9 -1 -6 C-3 -4 -2 -1 -5 0 C-8 -1 -10 -4 -9 -7 Z M1 -10 C4 -11 7 -9 8 -7 C6 -6 4 -7 3 -5 C1 -6 0 -8 1 -10 Z M3 3 C6 1 10 3 10 6 C8 8 6 7 4 8 C2 7 2 5 3 3 Z M-8 7 C-5 6 -2 8 -2 11 C-5 12 -8 10 -8 7 Z" fill="#3cb044"/></g></g><g transform="translate(126,730)"><rect x="1.2" y="7.2" width="29.6" height="17.6" rx="1.2" fill="none" stroke="#f2f25c" stroke-width="1.9"/><text x="4.4" y="21.6" font-family="Liberation Sans, sans-serif" font-weight="bold" font-size="15" fill="#f2f25c" textLength="12.4" lengthAdjust="spacingAndGlyphs">M</text><path d="M23.4 10.4 V19 M19.6 16 L23.4 20.6 L27.2 16" fill="none" stroke="#f2f25c" stroke-width="2.6"/></g><g transform="translate(166,730)"><path d="M3.6 0.3 H21.3 L28.3 7.3 V31.3 H3.6 Z" fill="#e9e9e7" stroke="#cfcfcc" stroke-width="0.6"/><path d="M21.3 0.3 L28.3 7.3 H21.3 Z" fill="#c4c4c0"/><path d="M12.6 7.6 V18.8 L22.8 13.2 Z" fill="#0a0a0a"/><rect x="3.6" y="22.7" width="24.7" height="8.7" fill="#ea525e"/><text x="15.950000000000001" y="30.3" text-anchor="middle" font-family="Liberation Sans, sans-serif" font-weight="bold" font-size="9.6" fill="#fff" stroke="#3a3a3a" stroke-width="0.7" stroke-opacity="0.6" paint-order="stroke" textLength="17" lengthAdjust="spacingAndGlyphs">AVI</text></g><g transform="translate(206,730)"><path d="M4 0.3 H21.2 L28.2 7.3 V31.3 H4 Z" fill="#e9e9e7" stroke="#cfcfcc" stroke-width="0.6"/><path d="M21.2 0.3 L28.2 7.3 H21.2 Z" fill="#c4c4c0"/><polygon points="17.5,6.5 17.5,8.3 15.9,8.3 15.4,9.5 16.5,10.7 15.3,11.9 14.1,10.8 12.9,11.3 12.9,12.9 11.1,12.9 11.1,11.3 9.9,10.8 8.7,11.9 7.5,10.7 8.6,9.5 8.1,8.3 6.5,8.3 6.5,6.5 8.1,6.5 8.6,5.3 7.5,4.1 8.7,2.9 9.9,4.0 11.1,3.5 11.1,1.9 12.9,1.9 12.9,3.5 14.1,4.0 15.3,2.9 16.5,4.1 15.4,5.3 15.9,6.5" fill="#e21010"/><circle cx="12" cy="7.4" r="1.8" fill="#e9e9e7"/><polygon points="26.3,13.2 26.3,15.6 24.2,15.7 23.6,17.3 24.9,18.9 23.3,20.5 21.7,19.2 20.1,19.8 20.0,21.9 17.6,21.9 17.5,19.8 15.9,19.2 14.3,20.5 12.7,18.9 14.0,17.3 13.4,15.7 11.3,15.6 11.3,13.2 13.4,13.1 14.0,11.5 12.7,9.9 14.3,8.3 15.9,9.6 17.5,9.0 17.6,6.9 20.0,6.9 20.1,9.0 21.7,9.6 23.3,8.3 24.9,9.9 23.6,11.5 24.2,13.1" fill="#e21010"/><circle cx="18.8" cy="14.4" r="2.6" fill="#e9e9e7"/><rect x="4" y="22.7" width="24.2" height="8.7" fill="#e21010"/><text x="16.1" y="30.3" text-anchor="middle" font-family="Liberation Sans, sans-serif" font-weight="bold" font-size="9.6" fill="#fff" stroke="#3a3a3a" stroke-width="0.7" stroke-opacity="0.6" paint-order="stroke" textLength="20" lengthAdjust="spacingAndGlyphs">CMD</text></g><g transform="translate(246,730)"><path d="M4 0.3 H21.2 L28.2 7.3 V31.3 H4 Z" fill="#e9e9e7" stroke="#cfcfcc" stroke-width="0.6"/><path d="M21.2 0.3 L28.2 7.3 H21.2 Z" fill="#c4c4c0"/><polygon points="17.5,6.5 17.5,8.3 15.9,8.3 15.4,9.5 16.5,10.7 15.3,11.9 14.1,10.8 12.9,11.3 12.9,12.9 11.1,12.9 11.1,11.3 9.9,10.8 8.7,11.9 7.5,10.7 8.6,9.5 8.1,8.3 6.5,8.3 6.5,6.5 8.1,6.5 8.6,5.3 7.5,4.1 8.7,2.9 9.9,4.0 11.1,3.5 11.1,1.9 12.9,1.9 12.9,3.5 14.1,4.0 15.3,2.9 16.5,4.1 15.4,5.3 15.9,6.5" fill="#e21010"/><circle cx="12" cy="7.4" r="1.8" fill="#e9e9e7"/><polygon points="26.3,13.2 26.3,15.6 24.2,15.7 23.6,17.3 24.9,18.9 23.3,20.5 21.7,19.2 20.1,19.8 20.0,21.9 17.6,21.9 17.5,19.8 15.9,19.2 14.3,20.5 12.7,18.9 14.0,17.3 13.4,15.7 11.3,15.6 11.3,13.2 13.4,13.1 14.0,11.5 12.7,9.9 14.3,8.3 15.9,9.6 17.5,9.0 17.6,6.9 20.0,6.9 20.1,9.0 21.7,9.6 23.3,8.3 24.9,9.9 23.6,11.5 24.2,13.1" fill="#e21010"/><circle cx="18.8" cy="14.4" r="2.6" fill="#e9e9e7"/><rect x="4" y="22.7" width="24.2" height="8.7" fill="#e21010"/><text x="16.1" y="30.3" text-anchor="middle" font-family="Liberation Sans, sans-serif" font-weight="bold" font-size="9.6" fill="#fff" stroke="#3a3a3a" stroke-width="0.7" stroke-opacity="0.6" paint-order="stroke" textLength="19" lengthAdjust="spacingAndGlyphs">BAT</text></g><g transform="translate(286,730)"><path d="M4 0.3 H21.2 L28.2 7.3 V31.3 H4 Z" fill="#e9e9e7" stroke="#cfcfcc" stroke-width="0.6"/><path d="M21.2 0.3 L28.2 7.3 H21.2 Z" fill="#c4c4c0"/><path d="M7 6 H10.4 M7 9.4 H14 M15.4 9.4 H21.6 M22.8 9.4 H25 M7 12.6 H20.4 M21.8 12.6 H25 M7 15.8 H10 M11.4 15.8 H17 M18.4 15.8 H25 M7 19 H8.4 M9.8 19 H14.4" stroke="#2a2a2a" stroke-width="1.5"/><rect x="4" y="22.7" width="24.2" height="8.7" fill="#2c7c1c"/><text x="16.1" y="30.3" text-anchor="middle" font-family="Liberation Sans, sans-serif" font-weight="bold" font-size="9.6" fill="#fff" stroke="#3a3a3a" stroke-width="0.7" stroke-opacity="0.6" paint-order="stroke" textLength="18" lengthAdjust="spacingAndGlyphs">TXT</text></g><g transform="translate(326,730)"><path d="M4 0.3 H21.4 L28.4 7.3 V31.3 H4 Z" fill="#e9e9e7" stroke="#cfcfcc" stroke-width="0.6"/><path d="M21.4 0.3 L28.4 7.3 H21.4 Z" fill="#c4c4c0"/><path d="M13.4 7 L8.6 13.2 L13.4 19.4 M18.8 7 L23.6 13.2 L18.8 19.4" fill="none" stroke="#f08c4c" stroke-width="1.3"/><rect x="4" y="22.7" width="24.4" height="8.7" fill="#e2723c"/><text x="16.2" y="30.3" text-anchor="middle" font-family="Liberation Sans, sans-serif" font-weight="bold" font-size="9" fill="#fff" stroke="#3a3a3a" stroke-width="0.7" stroke-opacity="0.6" paint-order="stroke" textLength="21.4" lengthAdjust="spacingAndGlyphs">HTML</text></g><g transform="translate(6,766)"><path d="M15.8 15.8 C9 10 10 3 15.8 0.6 C21.6 3 22.6 10 15.8 15.8 Z" transform="rotate(0 15.8 15.8)" fill="#f6a21c"/><path d="M15.8 15.8 C9 10 10 3 15.8 0.6 C21.6 3 22.6 10 15.8 15.8 Z" transform="rotate(60 15.8 15.8)" fill="#f03c3c"/><path d="M15.8 15.8 C9 10 10 3 15.8 0.6 C21.6 3 22.6 10 15.8 15.8 Z" transform="rotate(120 15.8 15.8)" fill="#c43cf0"/><path d="M15.8 15.8 C9 10 10 3 15.8 0.6 C21.6 3 22.6 10 15.8 15.8 Z" transform="rotate(180 15.8 15.8)" fill="#2c8cf0"/><path d="M15.8 15.8 C9 10 10 3 15.8 0.6 C21.6 3 22.6 10 15.8 15.8 Z" transform="rotate(240 15.8 15.8)" fill="#3cb02c"/><path d="M15.8 15.8 C9 10 10 3 15.8 0.6 C21.6 3 22.6 10 15.8 15.8 Z" transform="rotate(300 15.8 15.8)" fill="#f0c81c"/><circle cx="15.8" cy="15.8" r="8.4" fill="#fff"/><circle cx="15.8" cy="15.8" r="6.2" fill="url(#gpc)"/></g><g transform="translate(46,766)"><rect x="3.3" y="3.2" width="25.5" height="25.3" rx="4" fill="#d8300c"/><path d="M14.4 3.4 C17.6 5 16.4 11 14.4 16 C12 22 7 27 4.4 26 C3 23 9 19.6 16 18.6 C22 17.6 27.6 18 28 20 C27 22.6 20 20 16.6 15.6 C13.6 11.6 12.4 5.4 14.4 3.4 Z" fill="none" stroke="#fff" stroke-width="1.9" stroke-linejoin="round"/></g><g transform="translate(86,766)"><rect x="4.3" y="7.3" width="22.6" height="16.6" rx="0.8" fill="#d9cb94" stroke="#8a8a1e" stroke-width="1.8"/><path d="M4.6 8 L15.6 18.4 L26.6 8 M4.6 23.4 L12.4 15.4 M26.6 23.4 L18.8 15.4" fill="none" stroke="#8a8a1e" stroke-width="1.5"/></g><g transform="translate(126,766)"><path d="M4.1 0.3 H21.4 L28.4 7.3 V31.3 H4.1 Z" fill="#e9e9e7" stroke="#cfcfcc" stroke-width="0.6"/><path d="M21.4 0.3 L28.4 7.3 H21.4 Z" fill="#c4c4c0"/><rect x="9.3" y="5.5" width="4.2" height="4.2" fill="#f6d040"/><path d="M4.1 22.8 V18 L13.1 12 L17.1 15.4 L23.1 10.6 L28.4 15 V22.8 Z" fill="#7ab84c"/><rect x="4.1" y="22.7" width="24.299999999999997" height="8.7" fill="#5a8c1c"/><text x="16.25" y="30.3" text-anchor="middle" font-family="Liberation Sans, sans-serif" font-weight="bold" font-size="9.6" fill="#fff" stroke="#3a3a3a" stroke-width="0.7" stroke-opacity="0.6" paint-order="stroke" textLength="19" lengthAdjust="spacingAndGlyphs">PNG</text></g><g transform="translate(166,766)"><text x="16.1" y="23" text-anchor="middle" font-family="Liberation Sans, sans-serif" font-weight="bold" font-size="26.5" fill="#8a8a08" stroke="#8a8a08" stroke-width="1.1">@</text></g><g transform="translate(206,766)"><path d="M4 0.3 H21.2 L28.2 7.3 V31.3 H4 Z" fill="#e9e9e7" stroke="#cfcfcc" stroke-width="0.6"/><path d="M21.2 0.3 L28.2 7.3 H21.2 Z" fill="#c4c4c0"/><text x="16.1" y="18" text-anchor="middle" font-family="Liberation Sans, sans-serif" font-size="15" fill="#a85cf0" textLength="13.6" lengthAdjust="spacingAndGlyphs">{;}</text><rect x="4" y="22.7" width="24.2" height="8.7" fill="#b264f2"/><text x="16.1" y="30.3" text-anchor="middle" font-family="Liberation Sans, sans-serif" font-weight="bold" font-size="9.2" fill="#fff" stroke="#3a3a3a" stroke-width="0.7" stroke-opacity="0.6" paint-order="stroke" textLength="21.4" lengthAdjust="spacingAndGlyphs">JSON</text></g><g transform="translate(246,766)"><path d="M4 0.3 H21.2 L28.2 7.3 V31.3 H4 Z" fill="#e9e9e7" stroke="#cfcfcc" stroke-width="0.6"/><path d="M21.2 0.3 L28.2 7.3 H21.2 Z" fill="#c4c4c0"/><path d="M16 2.8 L25 11.8 L16 20.8 L7 11.8 Z" fill="none" stroke="#2ca02c" stroke-width="3"/><path d="M11.6 11.8 L16 16.2 L22.8 9.4" fill="none" stroke="#2ca02c" stroke-width="3"/><rect x="14" y="9.6" width="4" height="4" transform="rotate(45 16 11.6)" fill="#e9e9e7"/><rect x="4" y="22.7" width="24.2" height="8.7" fill="#3cac3c"/><text x="16.1" y="30.3" text-anchor="middle" font-family="Liberation Sans, sans-serif" font-weight="bold" font-size="9.2" fill="#fff" stroke="#3a3a3a" stroke-width="0.7" stroke-opacity="0.6" paint-order="stroke" textLength="21.4" lengthAdjust="spacingAndGlyphs">ePUB</text></g><g transform="translate(286,766)"><path d="M4 0.3 H21.2 L28.2 7.3 V31.3 H4 Z" fill="#e9e9e7" stroke="#cfcfcc" stroke-width="0.6"/><path d="M21.2 0.3 L28.2 7.3 H21.2 Z" fill="#c4c4c0"/><text x="15.8" y="18.6" text-anchor="middle" font-family="Liberation Sans, sans-serif" font-size="15.5" fill="#d0621c" textLength="17.6" lengthAdjust="spacingAndGlyphs">C:/</text><rect x="4" y="22.7" width="24.2" height="8.7" fill="#c2521c"/><text x="16.1" y="30.3" text-anchor="middle" font-family="Liberation Sans, sans-serif" font-weight="bold" font-size="9.6" fill="#fff" stroke="#3a3a3a" stroke-width="0.7" stroke-opacity="0.6" paint-order="stroke" textLength="17.6" lengthAdjust="spacingAndGlyphs">EXE</text></g><g transform="translate(326,766)"><path d="M4.1 0.3 H21.4 L28.4 7.3 V31.3 H4.1 Z" fill="#e9e9e7" stroke="#cfcfcc" stroke-width="0.6"/><path d="M21.4 0.3 L28.4 7.3 H21.4 Z" fill="#c4c4c0"/><path d="M6.4 12.8 H19 M14.6 7.8 L19.8 12.8 L14.6 17.8" fill="none" stroke="#000" stroke-width="2.6"/><rect x="21.4" y="7.2" width="2.8" height="11.4" fill="#000"/><rect x="4.1" y="22.7" width="24.299999999999997" height="8.7" fill="#6a1cb0"/><text x="16.25" y="30.3" text-anchor="middle" font-family="Liberation Sans, sans-serif" font-weight="bold" font-size="9.6" fill="#fff" stroke="#3a3a3a" stroke-width="0.7" stroke-opacity="0.6" paint-order="stroke" textLength="17.6" lengthAdjust="spacingAndGlyphs">TSV</text></g></svg>
</div>
<div class="ab" style="left:398px;top:0px;width:2px;height:800px;background:#cdcdcd"></div>
<div class="ab" style="left:418px;top:-2px;width:899px;height:414px;background:#fff"></div>
<svg class="i" style="left:410px;top:0" width="915" height="420" viewBox="410 0 915 420"><path d="M417.4 -1 V412.7 H1317.7 V-1" fill="none" stroke="#c3c3c3" stroke-width="1.4"/></svg>
<svg class="i" style="left:0;top:0" width="1898" height="420" viewBox="0 0 1898 420"><ellipse cx="848.4" cy="226.7" rx="178.7" ry="36.8" fill="#aecff7"/><g fill="none" stroke="#de1a1a" stroke-width="1.05"><path d="M673.6,217.8 C664.6,217.8 656.0,180.5 640.0,180.5 L588.7,180.5"/><path d="M593.2,180.5 C577.5,180.5 578.5,144.5 561.5,144.5 L512.4,144.5"/><path d="M588.7,180.5 L512.4,180.5"/><path d="M593.2,180.5 C577.5,180.5 578.5,216.5 561.5,216.5 L512.4,216.5"/><path d="M678.7,239.2 C669.7,239.2 656.0,303.5 640.0,303.5 L588.7,303.5"/><path d="M593.2,303.5 C577.5,303.5 578.5,267.5 561.5,267.5 L512.4,267.5"/><path d="M588.7,303.5 L512.4,303.5"/><path d="M593.2,303.5 C577.5,303.5 578.5,339.5 561.5,339.5 L512.4,339.5"/><path d="M1023.4,217.8 C1032.4,217.8 1041.0,180.5 1057.0,180.5 L1108.3,180.5"/><path d="M1103.8,180.5 C1119.5,180.5 1118.5,144.5 1135.5,144.5 L1184.6,144.5"/><path d="M1108.3,180.5 L1184.6,180.5"/><path d="M1103.8,180.5 C1119.5,180.5 1118.5,216.5 1135.5,216.5 L1184.6,216.5"/><path d="M1018.3,239.2 C1027.3,239.2 1041.0,303.5 1057.0,303.5 L1108.3,303.5"/><path d="M1103.8,303.5 C1119.5,303.5 1118.5,267.5 1135.5,267.5 L1184.6,267.5"/><path d="M1108.3,303.5 L1184.6,303.5"/><path d="M1103.8,303.5 C1119.5,303.5 1118.5,339.5 1135.5,339.5 L1184.6,339.5"/></g><g font-family="Liberation Sans, sans-serif" font-size="19.6" fill="#000"><text x="593" y="174.2" textLength="41.5">Idée</text><text x="1059.6" y="174.2" textLength="41.5">Idée</text><text x="513.6" y="138.2" textLength="41.5">Idée</text><text x="1138.4" y="138.2" textLength="41.5">Idée</text><text x="513.6" y="174.2" textLength="41.5">Idée</text><text x="1138.4" y="174.2" textLength="41.5">Idée</text><text x="513.6" y="210.2" textLength="41.5">Idée</text><text x="1138.4" y="210.2" textLength="41.5">Idée</text><text x="593" y="297.2" textLength="41.5">Idée</text><text x="1059.6" y="297.2" textLength="41.5">Idée</text><text x="513.6" y="261.2" textLength="41.5">Idée</text><text x="1138.4" y="261.2" textLength="41.5">Idée</text><text x="513.6" y="297.2" textLength="41.5">Idée</text><text x="1138.4" y="297.2" textLength="41.5">Idée</text><text x="513.6" y="333.2" textLength="41.5">Idée</text><text x="1138.4" y="333.2" textLength="41.5">Idée</text></g><text x="719.6" y="242.6" font-family="Liberation Sans, sans-serif" font-size="37.3" textLength="245" fill="#000">Nouvelle carte</text></svg>
<div class="ab" style="left:856.0px;top:419.1px;width:4.8px;height:4.8px;background:#aaaaaa;border-radius:2.4px"></div>
<div class="ab" style="left:865.0px;top:419.1px;width:4.8px;height:4.8px;background:#aaaaaa;border-radius:2.4px"></div>
<div class="ab" style="left:874.0px;top:419.1px;width:4.8px;height:4.8px;background:#aaaaaa;border-radius:2.4px"></div>
<svg class="i" style="left:404px;top:460px" width="10" height="34" viewBox="0 0 10 34"><path d="M8.5 1.5 L1 16 L8.5 31 Z" fill="#000"/></svg>
<svg class="i" style="left:1322px;top:460px" width="10" height="34" viewBox="0 0 10 34"><path d="M1.5 1.5 L9 16 L1.5 31 Z" fill="#000"/></svg>
<div class="ab" style="left:423px;top:436px;width:889px;height:37px;background:#fff;border-bottom:1.5px solid #d6d6d6"></div>
<span class="t " style="left:436.83px;top:447.25px;font-size:19.5px;line-height:19.5px;color:#000;letter-spacing:0.454px;">Édition</span>
<span class="t " style="left:526.83px;top:447.25px;font-size:19.5px;line-height:19.5px;color:#000;letter-spacing:0.092px;">Mise en forme</span>
<span class="t " style="left:678.23px;top:447.25px;font-size:19.5px;line-height:19.5px;color:#000;letter-spacing:0.140px;">Tableau</span>
<span class="t " style="left:774.23px;top:447.25px;font-size:19.5px;line-height:19.5px;color:#000;letter-spacing:0.840px;">Aide</span>
<svg class="i" style="left:436px;top:486px" width="32" height="32" viewBox="0 0 32 32"><rect x="9.1" y="3.8" width="14" height="8" fill="#f2f2f2" stroke="#000" stroke-width="2.3"/><rect x="2.5" y="9.6" width="26.8" height="11.4" fill="#000"/><circle cx="26.7" cy="12" r="1.1" fill="#fff"/><rect x="9.2" y="16.1" width="13.8" height="11.8" fill="#e9f1fa" stroke="#4a8fd0" stroke-width="2.4"/></svg>
<svg class="i" style="left:486px;top:486px" width="32" height="32" viewBox="0 0 32 32"><path d="M2.8 13.2 L13 2.8 V8 C23 8 28 14 28 22.5 V29.1 H20.2 V24.5 C20.2 20 18 17.6 13 17.6 V23.6 Z" fill="#000"/></svg>
<svg class="i" style="left:536px;top:486px" width="32" height="32" viewBox="0 0 32 32"><path d="M29.2 13.2 L19 2.8 V8 C9 8 4 14 4 22.5 V29.1 H11.8 V24.5 C11.8 20 14 17.6 19 17.6 V23.6 Z" fill="#000"/></svg>
<div class="ab" style="left:579px;top:480px;width:1px;height:45px;background:#cbcbcb"></div>
<svg class="i" style="left:591px;top:486px" width="32" height="32" viewBox="0 0 32 32"><path d="M8.2 3.5 L21.6 22.6 M22.2 3.5 L8.8 22.6" stroke="#000" stroke-width="2.3" fill="none"/><circle cx="10.3" cy="25.1" r="3.3" fill="#f2f2f2" stroke="#4a8fd6" stroke-width="2.1"/><circle cx="22" cy="25.1" r="3.3" fill="#f2f2f2" stroke="#4a8fd6" stroke-width="2.1"/></svg>
<svg class="i" style="left:641px;top:486px" width="32" height="32" viewBox="0 0 32 32"><path d="M19.3 6 V2.5 H4.4 V23.8 H11" fill="none" stroke="#000" stroke-width="2.3"/><path d="M12.5 8 H23 L27.7 12.7 V29.3 H12.5 Z" fill="#f4f6fa" stroke="#000" stroke-width="2.3"/><path d="M23 8 L27.7 12.7 H23 Z" fill="#000"/><path d="M16.7 18.8 H23 M16.7 24 H23" stroke="#4a8fd6" stroke-width="2.2"/></svg>
<svg class="i" style="left:691px;top:486px" width="32" height="32" viewBox="0 0 32 32"><path d="M10 6.2 H5.3 V29.5 H26.6 V6.2 H22" fill="none" stroke="#000" stroke-width="2.4"/><rect x="11" y="2.8" width="10" height="4.6" fill="#000"/><path d="M9.2 9.8 H23.1 V20.5 Q23.1 25.3 18.3 25.3 H9.2 Z" fill="#3f86cf"/></svg>
<div class="ab" style="left:734px;top:480px;width:1px;height:45px;background:#cbcbcb"></div>
<svg class="i" style="left:745px;top:486px" width="32" height="32" viewBox="0 0 32 32"><circle cx="14.4" cy="13.5" r="8.3" fill="none" stroke="#000" stroke-width="4.7"/><path d="M20.3 19.6 L26.6 25.8" stroke="#000" stroke-width="5"/></svg>
<svg class="i" style="left:430px;top:536px" width="345" height="40" viewBox="430 536 345 40"><rect x="431.75" y="537.75" width="341.5" height="36.0" rx="3.25" fill="#fff" stroke="#c2c2c2" stroke-width="1.5"/></svg>
<span class="t " style="left:442.33px;top:548.25px;font-size:19.5px;line-height:19.5px;color:#000;letter-spacing:-0.449px;">SansSerif</span>
<svg class="i" style="left:748px;top:552px" width="16" height="10" viewBox="0 0 16 10"><path d="M0 0.4 L16 0.4 L8 9.2 Z" fill="#666"/></svg>
<svg class="i" style="left:781px;top:536px" width="109" height="40" viewBox="781 536 109 40"><rect x="782.75" y="537.75" width="105.0" height="36.0" rx="3.25" fill="#fff" stroke="#c2c2c2" stroke-width="1.5"/></svg>
<div class="ab" style="left:853px;top:538px;width:1.2px;height:36px;background:#c4c4c4"></div>
<span class="t " style="left:794.83px;top:548.25px;font-size:19.5px;line-height:19.5px;color:#000;letter-spacing:-0.240px;">10</span>
<svg class="i" style="left:863px;top:552px" width="16" height="10" viewBox="0 0 16 10"><path d="M0 0.4 L16 0.4 L8 9.2 Z" fill="#666"/></svg>
<div class="ab" style="left:895px;top:533px;width:1px;height:46px;background:#cbcbcb"></div>
<svg class="i" style="left:900px;top:532px" width="300" height="48" viewBox="900 532 300 48"><text x="911.2" y="567.6" font-family="Liberation Serif, serif" font-weight="bold" font-size="36" textLength="23" lengthAdjust="spacingAndGlyphs" stroke="#000" stroke-width="0.9">B</text><text x="964.2" y="568" font-family="Liberation Serif, serif" font-weight="bold" font-style="italic" font-size="36.5">I</text><text x="1011.6" y="562.6" font-family="Liberation Serif, serif" font-weight="bold" font-size="28.5" textLength="22.4" lengthAdjust="spacingAndGlyphs" stroke="#000" stroke-width="1">U</text><rect x="1012.5" y="565.2" width="21.5" height="3.9" fill="#000"/><text x="1062.3" y="562.3" font-family="Liberation Serif, serif" font-weight="bold" font-size="30" textLength="21.6" lengthAdjust="spacingAndGlyphs" stroke="#000" stroke-width="0.5">A</text><rect x="1060.9" y="564.7" width="24.1" height="4.4" fill="#3f86cf"/><rect x="1111" y="542.3" width="24" height="27.2" fill="#3f86cf"/><text x="1111.8" y="566" font-family="Liberation Serif, serif" font-weight="bold" font-size="30" textLength="22.2" lengthAdjust="spacingAndGlyphs" stroke="#000" stroke-width="0.5">A</text><text x="1159.5" y="562.3" font-family="Liberation Serif, serif" font-weight="bold" font-size="30" font-style="italic" textLength="19" lengthAdjust="spacingAndGlyphs">A</text><g transform="translate(1177.2 559.3) rotate(-45)"><rect x="-8.3" y="-7.2" width="16.6" height="14.4" rx="1.6" fill="#f2f2f2"/><rect x="-6.8" y="-5.7" width="13.6" height="11.4" rx="1.5" fill="#3f86cf"/><rect x="-7" y="0.6" width="14" height="1.5" fill="#f2f2f2" transform="rotate(90) translate(0 3)"/></g></svg>
<svg class="i" style="left:430px;top:590px" width="154" height="40" viewBox="430 590 154 40"><rect x="431.75" y="591.75" width="150.0" height="36.0" rx="3.25" fill="#fff" stroke="#c2c2c2" stroke-width="1.5"/></svg>
<span class="t " style="left:442.33px;top:602.25px;font-size:19.5px;line-height:19.5px;color:#000;letter-spacing:-0.452px;">Paragrap...</span>
<svg class="i" style="left:557.5px;top:605.5px" width="16" height="10" viewBox="0 0 16 10"><path d="M0 0.4 L16 0.4 L8 9.2 Z" fill="#666"/></svg>
<div class="ab" style="left:591px;top:589px;width:41.5px;height:41.5px;background:#cfcfcf;border-radius:5px"></div>
<svg class="i" style="left:596px;top:594px" width="32" height="32" viewBox="0 0 32 32"><rect x="3.8" y="4.050000000000001" width="24.2" height="2.7" fill="#000"/><rect x="3.8" y="9.25" width="17.4" height="2.7" fill="#000"/><rect x="3.8" y="14.65" width="24.2" height="2.7" fill="#000"/><rect x="3.8" y="20.049999999999997" width="17.4" height="2.7" fill="#000"/><rect x="3.8" y="25.25" width="13.3" height="2.7" fill="#000"/></svg>
<svg class="i" style="left:646px;top:594px" width="32" height="32" viewBox="0 0 32 32"><rect x="3.9" y="4.050000000000001" width="24.200000000000003" height="2.7" fill="#000"/><rect x="8.1" y="9.25" width="15.799999999999999" height="2.7" fill="#000"/><rect x="3.9" y="14.65" width="24.200000000000003" height="2.7" fill="#000"/><rect x="8.1" y="20.049999999999997" width="15.799999999999999" height="2.7" fill="#000"/><rect x="10.8" y="25.25" width="10.399999999999999" height="2.7" fill="#000"/></svg>
<svg class="i" style="left:696px;top:594px" width="32" height="32" viewBox="0 0 32 32"><rect x="3.8" y="4.050000000000001" width="24.2" height="2.7" fill="#000"/><rect x="10.8" y="9.25" width="17.2" height="2.7" fill="#000"/><rect x="3.8" y="14.65" width="24.2" height="2.7" fill="#000"/><rect x="10.8" y="20.049999999999997" width="17.2" height="2.7" fill="#000"/><rect x="14.7" y="25.25" width="13.3" height="2.7" fill="#000"/></svg>
<div class="ab" style="left:739px;top:587px;width:1px;height:46px;background:#cbcbcb"></div>
<svg class="i" style="left:751px;top:594px" width="32" height="32" viewBox="0 0 32 32"><circle cx="6.6" cy="6.5" r="2.6" fill="#000"/><rect x="12" y="5.15" width="15.8" height="2.7" fill="#000"/><circle cx="6.6" cy="16" r="2.6" fill="#000"/><rect x="12" y="14.65" width="15.8" height="2.7" fill="#000"/><circle cx="6.6" cy="25.2" r="2.6" fill="#000"/><rect x="12" y="23.849999999999998" width="15.8" height="2.7" fill="#000"/></svg>
<svg class="i" style="left:801px;top:594px" width="32" height="32" viewBox="0 0 32 32"><text x="3.4" y="10.1" font-family="Liberation Sans, sans-serif" font-weight="bold" font-size="10.5" fill="#000">1</text><rect x="12" y="5.15" width="15.8" height="2.7" fill="#000"/><text x="3.4" y="19.6" font-family="Liberation Sans, sans-serif" font-weight="bold" font-size="10.5" fill="#000">2</text><rect x="12" y="14.65" width="15.8" height="2.7" fill="#000"/><text x="3.4" y="28.8" font-family="Liberation Sans, sans-serif" font-weight="bold" font-size="10.5" fill="#000">3</text><rect x="12" y="23.849999999999998" width="15.8" height="2.7" fill="#000"/></svg>
<div class="ab" style="left:427px;top:641px;width:881px;height:170px;background:#fff;border:1.3px solid #c6c6c6;box-sizing:border-box"></div>
<svg class="i" style="left:1352px;top:5px" width="40" height="36" viewBox="0 0 40 36"><path d="M13.4 19 C11 19.5 7 22.6 5.2 21.3 C3 19.8 3.6 14 7.5 9.8 C12 5 19 3.8 25.5 5.6 C32 7.5 36.3 12.5 36 18.5 C35.7 25.5 29.5 31.5 21 31.7 C15 31.8 10.2 30.2 9.8 27.6 C9.4 25 14.5 21 13.4 19 Z" fill="#eef3fa" stroke="#111" stroke-width="1.25"/><ellipse cx="19" cy="25.2" rx="3.7" ry="2.2" transform="rotate(15 19 25.2)" fill="#f2f2f2" stroke="#111" stroke-width="1.4"/><circle cx="12.7" cy="11.6" r="2.6" fill="#3f86cf"/><circle cx="21.6" cy="9.75" r="2.6" fill="#3f86cf"/><circle cx="29.8" cy="15.3" r="2.6" fill="#3f86cf"/><circle cx="28.8" cy="23.4" r="2.6" fill="#3f86cf"/></svg>
<svg class="i" style="left:1444px;top:7px" width="18" height="32" viewBox="0 0 18 32"><rect x="4.6" y="2.5" width="8.8" height="5" rx="0.7" fill="#3f86cf" stroke="#222" stroke-width="0.9"/><rect x="4.6" y="9.9" width="8.8" height="5" rx="0.7" fill="#fff" stroke="#222" stroke-width="0.9"/><rect x="4.6" y="17.3" width="8.8" height="5" rx="0.7" fill="#3f86cf" stroke="#222" stroke-width="0.9"/><rect x="4.6" y="24.6" width="8.8" height="5" rx="0.7" fill="#fff" stroke="#222" stroke-width="0.9"/></svg>
<svg class="i" style="left:1516px;top:5px" width="36" height="36" viewBox="0 0 36 36"><rect x="2.6" y="2.6" width="30.8" height="30.8" rx="2.5" fill="#fff" stroke="#4a8fd0" stroke-width="1.2"/><path d="M2 12.9 V4.5 Q2 2 4.5 2 H31.5 Q34 2 34 4.5 V12.9 Z" fill="#4a8fd0"/><circle cx="7.8" cy="2.3" r="1.3" fill="#f2f2f2"/><circle cx="27.8" cy="2.3" r="1.3" fill="#f2f2f2"/><text x="3.6" y="11.6" font-family="Liberation Sans, sans-serif" font-weight="bold" font-size="8.6" fill="#fff" textLength="20.5" lengthAdjust="spacingAndGlyphs">MAR</text><rect x="25.6" y="6.2" width="1.5" height="1.5" fill="#9cc3ec"/><rect x="25.6" y="8.8" width="1.5" height="1.5" fill="#9cc3ec"/><rect x="28.200000000000003" y="6.2" width="1.5" height="1.5" fill="#9cc3ec"/><rect x="28.200000000000003" y="8.8" width="1.5" height="1.5" fill="#9cc3ec"/><rect x="30.8" y="6.2" width="1.5" height="1.5" fill="#9cc3ec"/><rect x="30.8" y="8.8" width="1.5" height="1.5" fill="#9cc3ec"/><text x="8.4" y="30" font-family="Liberation Sans, sans-serif" font-weight="bold" font-size="18.2" fill="#000" textLength="19" lengthAdjust="spacingAndGlyphs">21</text></svg>
<svg class="i" style="left:1596px;top:5px" width="38" height="36" viewBox="0 0 38 36"><path d="M4.9 21.2 H34.5 V29 Q34.5 33.2 30.3 33.2 H9.1 Q4.9 33.2 4.9 29 Z" fill="#f3f3f3" stroke="#4a8fd0" stroke-width="1.5"/><rect x="4.4" y="15.1" width="30.4" height="6.3" fill="#fff"/><path d="M4.4 15.1 H7.5 L4.4 21.4 Z M14.1 15.1 H20.1 L17 21.4 H11 Z M27 15.1 H33.1 L29.9 21.4 H23.9 Z" fill="#000"/><g transform="translate(3.2 9.1) rotate(-12.7)"><rect x="0" y="0" width="31.3" height="6.1" fill="#fff"/><path d="M5.5 0 H12 L17 6.1 H10.5 Z M18.5 0 H25 L30 6.1 H23.5 Z" fill="#000"/></g><path d="M3.2 9.1 L4.6 21.2 L8.2 14.6 Z" fill="#000"/></svg>
<div class="ab" style="left:1575px;top:48px;width:81px;height:5px;background:#8eb4dc"></div>
<svg class="i" style="left:1330px;top:40px" width="568" height="760" viewBox="1330 40 568 760"><rect x="1332" y="51" width="566" height="1.5" fill="#d0d0d0"/><rect x="1335.7" y="56.5" width="562.3" height="1.4" fill="#cfcfcf"/><rect x="1335.7" y="56.5" width="1.4" height="750" fill="#cdcdcd"/><rect x="1339.9" y="71" width="547.3999999999999" height="114.19999999999999" fill="none" stroke="#cbcbcb" stroke-width="1.6"/><rect x="1344" y="65" width="123" height="12" fill="#f2f2f2"/><rect x="1339.9" y="201" width="547.3999999999999" height="114" fill="none" stroke="#cbcbcb" stroke-width="1.6"/><rect x="1344" y="195" width="111.6" height="12" fill="#f2f2f2"/><rect x="1339.9" y="330.6" width="547.3999999999999" height="569.4" fill="none" stroke="#cbcbcb" stroke-width="1.6"/><rect x="1344" y="324.6" width="255.5" height="12" fill="#f2f2f2"/><rect x="1557.9" y="764.6" width="106" height="60" fill="none" stroke="#cbcbcb" stroke-width="1.5"/><rect x="1562" y="758" width="49" height="12" fill="#f2f2f2"/></svg>
<div class="ab" style="left:1890.5px;top:58px;width:8px;height:742px;background:#f5f5f5"></div>
<div class="ab" style="left:1890.5px;top:58px;width:8px;height:692px;background:#dedede"></div>
<span class="t " style="left:1345.92px;top:65.00px;font-size:18px;line-height:18px;color:#000;letter-spacing:0.644px;">Présentations</span>
<span class="t " style="left:1345.92px;top:195.00px;font-size:18px;line-height:18px;color:#000;letter-spacing:0.851px;">Diapositives</span>
<span class="t " style="left:1345.92px;top:325.00px;font-size:18px;line-height:18px;color:#000;letter-spacing:0.857px;">Contenu de cette diapositive</span>
<span class="t " style="left:1371.92px;top:102.00px;font-size:18px;line-height:18px;color:#000;letter-spacing:0.000px;transform:scaleX(1.27);transform-origin:0 0;">-/-</span>
<svg class="i" style="left:1431px;top:90px" width="450" height="39" viewBox="1431 90 450 39"><rect x="1433.15" y="91.75" width="445.5" height="35.1" rx="3.25" fill="#fff" stroke="#c2c2c2" stroke-width="1.5"/></svg>
<svg class="i" style="left:1854px;top:105px" width="16" height="10" viewBox="0 0 16 10"><path d="M0 0.4 L16 0.4 L8 9.2 Z" fill="#666"/></svg>
<svg class="i" style="left:1433px;top:135px" width="44" height="44" viewBox="1433 135 44 44"><rect x="1434.95" y="136.95" width="40.0" height="39.9" rx="4.25" fill="#fff" stroke="#c6c6c6" stroke-width="1.5"/></svg>
<svg class="i" style="left:1439px;top:141px" width="32" height="32" viewBox="0 0 32 32"><rect x="2.9" y="5.2" width="26.5" height="3.2" fill="#3f86cf"/><rect x="5.5" y="8" width="21.1" height="11" fill="#3f86cf"/><rect x="2.9" y="18.7" width="26.5" height="2.7" fill="#3f86cf"/><path d="M16 21 L10.2 27 M16 21 L21.8 27 M16 21 V27.4" stroke="#3f86cf" stroke-width="2.6" fill="none"/><path d="M12.8 14.3 H19.2 M16 11.1 V17.5" stroke="#fff" stroke-width="2.2"/></svg>
<svg class="i" style="left:1483px;top:135px" width="44" height="44" viewBox="1483 135 44 44"><rect x="1484.95" y="136.95" width="40.0" height="39.9" rx="4.25" fill="#f2f2f2" stroke="#cecece" stroke-width="1.5"/></svg>
<svg class="i" style="left:1489px;top:141px" width="32" height="32" viewBox="0 0 32 32"><rect x="13" y="3.7" width="8.8" height="3" fill="none" stroke="#8f8f8f" stroke-width="1.7"/><rect x="6.1" y="6.3" width="21" height="2.5" fill="#8f8f8f"/><path d="M9 12.3 H24.8 V25.7 Q24.8 29.2 21.3 29.2 H12.5 Q9 29.2 9 25.7 Z" fill="#8f8f8f"/></svg>
<svg class="i" style="left:1533px;top:135px" width="44" height="44" viewBox="1533 135 44 44"><rect x="1534.95" y="136.95" width="40.0" height="39.9" rx="4.25" fill="#f2f2f2" stroke="#cecece" stroke-width="1.5"/></svg>
<svg class="i" style="left:1539px;top:141px" width="32" height="32" viewBox="0 0 32 32"><path d="M15.9 3.6 Q16.6 3.6 17.2 4.4 L26 16.6 Q26.6 18.2 25 18.2 H19.8 V28.9 H11.9 V18.2 H6.9 Q5.2 18.2 6 16.6 L14.7 4.4 Q15.2 3.6 15.9 3.6 Z" fill="#8f8f8f"/></svg>
<svg class="i" style="left:1583px;top:135px" width="44" height="44" viewBox="1583 135 44 44"><rect x="1584.95" y="136.95" width="40.0" height="39.9" rx="4.25" fill="#f2f2f2" stroke="#cecece" stroke-width="1.5"/></svg>
<svg class="i" style="left:1589px;top:141px" width="32" height="32" viewBox="0 0 32 32"><path d="M16 29.3 Q16.7 29.3 17.3 28.5 L26.1 16.3 Q26.7 14.7 25.1 14.7 H19.9 V4 H12 V14.7 H7 Q5.3 14.7 6.1 16.3 L14.8 28.5 Q15.3 29.3 16 29.3 Z" fill="#8f8f8f"/></svg>
<svg class="i" style="left:1633px;top:135px" width="44" height="44" viewBox="1633 135 44 44"><rect x="1634.95" y="136.95" width="40.0" height="39.9" rx="4.25" fill="#f2f2f2" stroke="#cecece" stroke-width="1.5"/></svg>
<svg class="i" style="left:1639px;top:141px" width="32" height="32" viewBox="0 0 32 32"><path d="M3.6 10.3 L9.9 5.3 V7.9 H24.9 V12.7 H9.9 V15.3 Z" fill="#8f8f8f"/><path d="M27.2 22.3 L20.7 17.2 V19.9 H5.5 V24.7 H20.7 V27.5 Z" fill="#8f8f8f"/></svg>
<svg class="i" style="left:1683px;top:135px" width="44" height="44" viewBox="1683 135 44 44"><rect x="1684.95" y="136.95" width="40.0" height="39.9" rx="4.25" fill="#f2f2f2" stroke="#cecece" stroke-width="1.5"/></svg>
<svg class="i" style="left:1689px;top:141px" width="32" height="32" viewBox="0 0 32 32"><path d="M22.8 4.1 H3.8 V22.1" fill="none" stroke="#8f8f8f" stroke-width="2.5"/><rect x="9.3" y="9.9" width="17.4" height="16.6" fill="none" stroke="#b2b2b2" stroke-width="2.5"/></svg>
<span class="t " style="left:1371.92px;top:232.00px;font-size:18px;line-height:18px;color:#9a9a9a;letter-spacing:0.000px;transform:scaleX(1.27);transform-origin:0 0;">-/-</span>
<svg class="i" style="left:1431px;top:220px" width="450" height="39" viewBox="1431 220 450 39"><rect x="1433.15" y="221.75" width="445.5" height="35.1" rx="3.25" fill="#f2f2f2" stroke="#d0d0d0" stroke-width="1.5"/></svg>
<svg class="i" style="left:1854px;top:235px" width="16" height="10" viewBox="0 0 16 10"><path d="M0 0.4 L16 0.4 L8 9.2 Z" fill="#a8a8a8"/></svg>
<svg class="i" style="left:1433px;top:265px" width="44" height="44" viewBox="1433 265 44 44"><rect x="1434.95" y="266.95" width="40.0" height="39.9" rx="4.25" fill="#f2f2f2" stroke="#cecece" stroke-width="1.5"/></svg>
<svg class="i" style="left:1439px;top:271px" width="32" height="32" viewBox="0 0 32 32"><rect x="4" y="4" width="23.9" height="23.9" rx="2.6" fill="#b4b4b4"/><rect x="6.8" y="9.3" width="18.7" height="10.8" fill="#f3f3f3"/><path d="M12.2 14.7 H20 M16.1 10.8 V18.6" stroke="#b0b0b0" stroke-width="2.6"/></svg>
<svg class="i" style="left:1483px;top:265px" width="44" height="44" viewBox="1483 265 44 44"><rect x="1484.95" y="266.95" width="40.0" height="39.9" rx="4.25" fill="#f2f2f2" stroke="#cecece" stroke-width="1.5"/></svg>
<svg class="i" style="left:1489px;top:271px" width="32" height="32" viewBox="0 0 32 32"><rect x="13" y="3.7" width="8.8" height="3" fill="none" stroke="#8f8f8f" stroke-width="1.7"/><rect x="6.1" y="6.3" width="21" height="2.5" fill="#8f8f8f"/><path d="M9 12.3 H24.8 V25.7 Q24.8 29.2 21.3 29.2 H12.5 Q9 29.2 9 25.7 Z" fill="#8f8f8f"/></svg>
<svg class="i" style="left:1533px;top:265px" width="44" height="44" viewBox="1533 265 44 44"><rect x="1534.95" y="266.95" width="40.0" height="39.9" rx="4.25" fill="#f2f2f2" stroke="#cecece" stroke-width="1.5"/></svg>
<svg class="i" style="left:1539px;top:271px" width="32" height="32" viewBox="0 0 32 32"><path d="M15.9 3.6 Q16.6 3.6 17.2 4.4 L26 16.6 Q26.6 18.2 25 18.2 H19.8 V28.9 H11.9 V18.2 H6.9 Q5.2 18.2 6 16.6 L14.7 4.4 Q15.2 3.6 15.9 3.6 Z" fill="#8f8f8f"/></svg>
<svg class="i" style="left:1583px;top:265px" width="44" height="44" viewBox="1583 265 44 44"><rect x="1584.95" y="266.95" width="40.0" height="39.9" rx="4.25" fill="#f2f2f2" stroke="#cecece" stroke-width="1.5"/></svg>
<svg class="i" style="left:1589px;top:271px" width="32" height="32" viewBox="0 0 32 32"><path d="M16 29.3 Q16.7 29.3 17.3 28.5 L26.1 16.3 Q26.7 14.7 25.1 14.7 H19.9 V4 H12 V14.7 H7 Q5.3 14.7 6.1 16.3 L14.8 28.5 Q15.3 29.3 16 29.3 Z" fill="#8f8f8f"/></svg>
<svg class="i" style="left:1633px;top:265px" width="44" height="44" viewBox="1633 265 44 44"><rect x="1634.95" y="266.95" width="40.0" height="39.9" rx="4.25" fill="#f2f2f2" stroke="#cecece" stroke-width="1.5"/></svg>
<svg class="i" style="left:1639px;top:271px" width="32" height="32" viewBox="0 0 32 32"><path d="M3.6 10.3 L9.9 5.3 V7.9 H24.9 V12.7 H9.9 V15.3 Z" fill="#8f8f8f"/><path d="M27.2 22.3 L20.7 17.2 V19.9 H5.5 V24.7 H20.7 V27.5 Z" fill="#8f8f8f"/></svg>
<svg class="i" style="left:1683px;top:265px" width="44" height="44" viewBox="1683 265 44 44"><rect x="1684.95" y="266.95" width="40.0" height="39.9" rx="4.25" fill="#f2f2f2" stroke="#cecece" stroke-width="1.5"/></svg>
<svg class="i" style="left:1689px;top:271px" width="32" height="32" viewBox="0 0 32 32"><path d="M22.8 4.1 H3.8 V22.1" fill="none" stroke="#8f8f8f" stroke-width="2.5"/><rect x="9.3" y="9.9" width="17.4" height="16.6" fill="none" stroke="#b2b2b2" stroke-width="2.5"/></svg>
<svg class="i" style="left:1489px;top:350px" width="44" height="44" viewBox="1489 350 44 44"><rect x="1490.85" y="352.05" width="40.0" height="39.7" rx="4.25" fill="#f2f2f2" stroke="#cecece" stroke-width="1.5"/></svg>
<svg class="i" style="left:1495px;top:356px" width="32" height="32" viewBox="0 0 32 32"><path d="M4.4 5.5 V27.6 H26.5" fill="none" stroke="#000" stroke-width="2.8"/><path d="M9.700000000000001 8.8 V22.3 H23.9" fill="none" stroke="#3f86cf" stroke-width="2.6"/><path d="M14.8 11.5 V17.3 H21.6" fill="none" stroke="#3f86cf" stroke-width="2.6"/><path d="M20.2 6.8 V11.5 H24.3" fill="none" stroke="#3f86cf" stroke-width="2.6"/><path d="M25.45 2.8 V6.35 H29" fill="none" stroke="#3f86cf" stroke-width="2.3"/></svg>
<svg class="i" style="left:1539px;top:350px" width="44" height="44" viewBox="1539 350 44 44"><rect x="1540.85" y="352.05" width="40.0" height="39.7" rx="4.25" fill="#f2f2f2" stroke="#cecece" stroke-width="1.5"/></svg>
<svg class="i" style="left:1545px;top:356px" width="32" height="32" viewBox="0 0 32 32"><rect x="2.9" y="9.5" width="26.1" height="12.7" rx="3.2" fill="#b8b8b8"/></svg>
<svg class="i" style="left:1589px;top:350px" width="44" height="44" viewBox="1589 350 44 44"><rect x="1590.85" y="352.05" width="40.0" height="39.7" rx="4.25" fill="#f2f2f2" stroke="#cecece" stroke-width="1.5"/></svg>
<svg class="i" style="left:1595px;top:356px" width="32" height="32" viewBox="0 0 32 32"><rect x="2.9" y="13.5" width="26.4" height="12.8" rx="3" fill="#b8b8b8"/><path d="M28.6 7.2 L15.2 19.8" stroke="#f2f2f2" stroke-width="7.5"/><path d="M12 23.6 L13.6 17.4 L18.2 21.8 Z" fill="#f2f2f2"/><path d="M28.6 7.2 L16.6 18.6" stroke="#b8b8b8" stroke-width="4.2"/><path d="M13.6 22.2 L14.6 18.6 L17.4 21.2 Z" fill="#b8b8b8"/></svg>
<svg class="i" style="left:1639px;top:350px" width="44" height="44" viewBox="1639 350 44 44"><rect x="1640.85" y="352.05" width="40.0" height="39.7" rx="4.25" fill="#f2f2f2" stroke="#cecece" stroke-width="1.5"/></svg>
<svg class="i" style="left:1645px;top:356px" width="32" height="32" viewBox="0 0 32 32"><rect x="2.9" y="9.5" width="25.9" height="12.7" rx="3" fill="#b8b8b8"/><path d="M7.6 7.4 L17.2 17 M17.2 7.4 L7.6 17" stroke="#f2f2f2" stroke-width="6"/><path d="M8 7.8 L16.8 16.6 M16.8 7.8 L8 16.6" stroke="#a2a2a2" stroke-width="2.6"/></svg>
<svg class="i" style="left:1689px;top:350px" width="44" height="44" viewBox="1689 350 44 44"><rect x="1690.85" y="352.05" width="40.0" height="39.7" rx="4.25" fill="#f2f2f2" stroke="#cecece" stroke-width="1.5"/></svg>
<svg class="i" style="left:1695px;top:356px" width="32" height="32" viewBox="0 0 32 32"><rect x="10.4" y="5.5" width="18.8" height="10" rx="3" fill="#b8b8b8"/><path d="M10.5 12.6 A6.3 6.3 0 1 0 15.3 20.6" fill="none" stroke="#8f8f8f" stroke-width="3.1"/><path d="M13.6 22.8 L19.8 27.6" stroke="#8f8f8f" stroke-width="3.4"/></svg>
<svg class="i" style="left:1424px;top:425px" width="374" height="44" viewBox="1424 425 374 44"><rect x="1426.25" y="426.75" width="370.0" height="40.1" rx="4.25" fill="#f2f2f2" stroke="#cecece" stroke-width="1.5"/></svg>
<svg class="i" style="left:1452px;top:431px" width="32" height="32" viewBox="0 0 32 32"><rect x="9.9" y="13.2" width="12.3" height="6.8" rx="2.6" fill="#3f86cf"/><path d="M2.7 12.4 V21 L7.7 16.7 Z M29.2 12.4 V21 L24.2 16.7 Z M10.6 6.7 H21.6 L16.1 11.2 Z M10.6 26.6 H21.6 L16.1 22 Z" fill="#000"/></svg>
<span class="t " style="left:1490.83px;top:440.25px;font-size:19.5px;line-height:19.5px;color:#8c8c8c;letter-spacing:0.079px;">Positionner le nœud sélectionné</span>
<svg class="i" style="left:1539px;top:475px" width="44" height="44" viewBox="1539 475 44 44"><rect x="1541.05" y="477.15" width="40.0" height="39.8" rx="4.25" fill="#f2f2f2" stroke="#cecece" stroke-width="1.5"/></svg>
<svg class="i" style="left:1545px;top:481px" width="32" height="32" viewBox="0 0 32 32"><rect x="2.8" y="13.2" width="12.1" height="6.6" rx="2.4" fill="#3f86cf"/><path d="M17.2 16.6 L23 11.4 V14.5 H27.9 V18.7 H23 V21.8 Z" fill="#000"/></svg>
<svg class="i" style="left:1589px;top:475px" width="44" height="44" viewBox="1589 475 44 44"><rect x="1591.05" y="477.15" width="40.0" height="39.8" rx="4.25" fill="#f2f2f2" stroke="#cecece" stroke-width="1.5"/></svg>
<svg class="i" style="left:1595px;top:481px" width="32" height="32" viewBox="0 0 32 32"><rect x="9.4" y="13.2" width="13" height="6.6" rx="2.4" fill="#3f86cf"/><path d="M2.5 11.5 V21.7 L8 16.6 Z M29.7 11.5 V21.7 L24.2 16.6 Z" fill="#000"/></svg>
<svg class="i" style="left:1639px;top:475px" width="44" height="44" viewBox="1639 475 44 44"><rect x="1641.05" y="477.15" width="40.0" height="39.8" rx="4.25" fill="#f2f2f2" stroke="#cecece" stroke-width="1.5"/></svg>
<svg class="i" style="left:1645px;top:481px" width="32" height="32" viewBox="0 0 32 32"><rect x="17.3" y="13.2" width="11.9" height="6.6" rx="2.4" fill="#3f86cf"/><path d="M14.4 16.6 L9 11.4 V14.5 H4.2 V18.7 H9 V21.8 Z" fill="#000"/></svg>
<svg class="i" style="left:1480px;top:550px" width="262" height="44" viewBox="1480 550 262 44"><rect x="1481.75" y="551.85" width="258.5" height="40.1" rx="4.25" fill="#f2f2f2" stroke="#cecece" stroke-width="1.5"/></svg>
<svg class="i" style="left:1505px;top:556px" width="32" height="32" viewBox="0 0 32 32"><circle cx="12.2" cy="17" r="6" fill="none" stroke="#000" stroke-width="3.5"/><path d="M16.2 21.2 L21.6 26.2" stroke="#000" stroke-width="4"/><path d="M27.6 3.6 L11.6 18.8" stroke="#f2f2f2" stroke-width="7"/><path d="M26.9 4.2 L15.6 15" stroke="#3f86cf" stroke-width="3.6"/><path d="M12.6 17.8 L13.8 14 L16.6 16.7 Z" fill="#3f86cf"/></svg>
<span class="t " style="left:1546.33px;top:565.25px;font-size:19.5px;line-height:19.5px;color:#8c8c8c;letter-spacing:0.241px;">Mémoriser le zoom</span>
<svg class="i" style="left:1405px;top:600px" width="26" height="26" viewBox="1405 600 26 26"><rect x="1406.75" y="601.75" width="22.5" height="22.5" rx="3.25" fill="#f4f4f4" stroke="#c4c4c4" stroke-width="1.5"/></svg>
<span class="t " style="left:1436.33px;top:607.25px;font-size:19.5px;line-height:19.5px;color:#8c8c8c;letter-spacing:-0.010px;">Afficher uniquement les nœuds sélectionnés</span>
<svg class="i" style="left:1513px;top:635px" width="26" height="27" viewBox="1513 635 26 27"><rect x="1514.75" y="637.25" width="22.5" height="22.5" rx="3.25" fill="#f4f4f4" stroke="#c4c4c4" stroke-width="1.5"/></svg>
<span class="t " style="left:1544.33px;top:642.25px;font-size:19.5px;line-height:19.5px;color:#8c8c8c;letter-spacing:-0.006px;">Afficher les parents</span>
<svg class="i" style="left:1534px;top:671px" width="26" height="26" viewBox="1534 671 26 26"><rect x="1535.75" y="672.75" width="22.5" height="22.5" rx="3.25" fill="#f4f4f4" stroke="#c4c4c4" stroke-width="1.5"/></svg>
<span class="t " style="left:1565.33px;top:677.25px;font-size:19.5px;line-height:19.5px;color:#8c8c8c;letter-spacing:0.006px;">Afficher les fils</span>
<svg class="i" style="left:1485px;top:705px" width="252" height="44" viewBox="1485 705 252 44"><rect x="1486.75" y="706.75" width="248.5" height="39.9" rx="4.25" fill="#f2f2f2" stroke="#cecece" stroke-width="1.5"/></svg>
<svg class="i" style="left:1512px;top:711px" width="32" height="32" viewBox="0 0 32 32"><path d="M3 2.25 H29 L19 13.4 V24.75 L13 28.8 V13.4 Z" fill="#000"/></svg>
<span class="t " style="left:1550.33px;top:720.25px;font-size:19.5px;line-height:19.5px;color:#8c8c8c;letter-spacing:0.306px;">Mémoriser le filtre</span>
<span class="t " style="left:1564.33px;top:758.25px;font-size:19.5px;line-height:19.5px;color:#000;letter-spacing:0.223px;">Filtre</span>
</div></body></html>
